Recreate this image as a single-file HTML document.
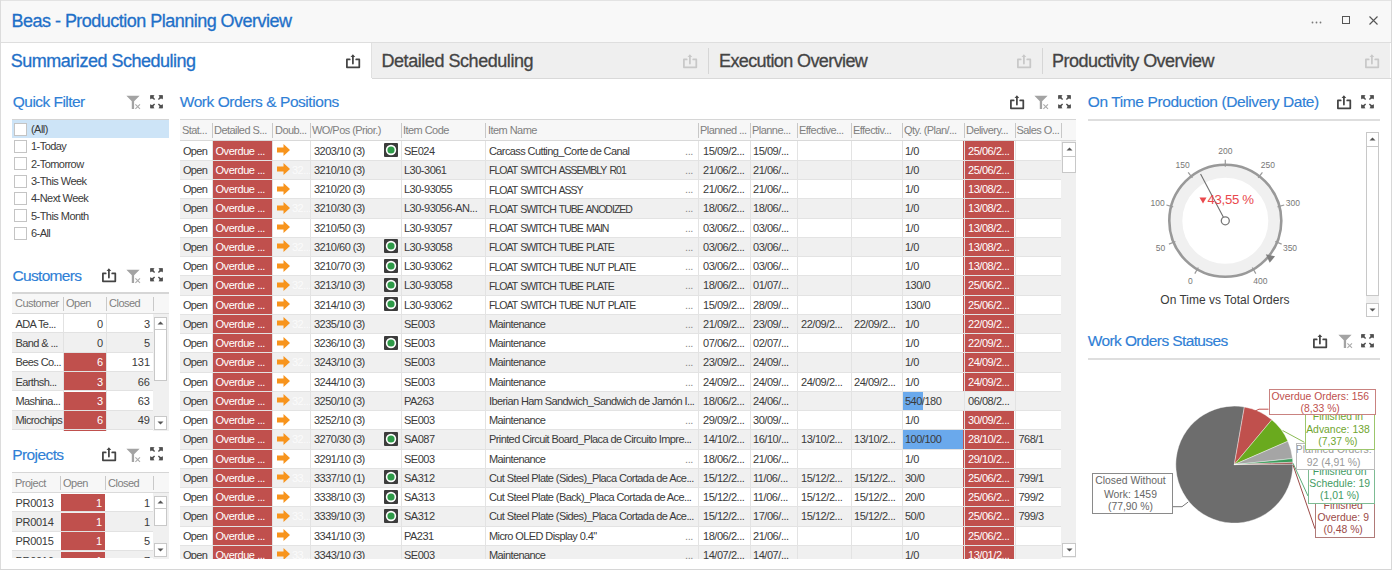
<!DOCTYPE html>
<html><head><meta charset="utf-8"><title>Beas - Production Planning Overview</title>
<style>
html,body{margin:0;padding:0;background:#fff;}
body{width:1392px;height:570px;position:relative;overflow:hidden;font-family:"Liberation Sans", sans-serif;}
.r{position:absolute;}
.t{position:absolute;white-space:nowrap;}
svg{overflow:visible;}
</style></head><body>
<div class="r" style="left:0px;top:0px;width:1392px;height:570px;background:#ffffff;"></div>
<div class="r" style="left:0px;top:0px;width:1392px;height:42px;background:#f8f8f8;"></div>
<div class="r" style="left:0px;top:0px;width:1392px;height:1px;background:#e3e3e3;"></div>
<div class="r" style="left:0px;top:42px;width:1392px;height:1.3px;background:#dedede;"></div>
<div class="r" style="left:0px;top:0px;width:1px;height:570px;background:#dcdcdc;"></div>
<div class="r" style="left:1391px;top:0px;width:1px;height:570px;background:#d8d8d8;"></div>
<div class="r" style="left:0px;top:569px;width:1392px;height:1px;background:#d6d6d6;"></div>
<div class="t" style="left:11.5px;top:11.76px;font-size:18px;line-height:18px;color:#1f70c8;letter-spacing:-0.52px;-webkit-text-stroke:0.3px currentColor;">Beas - Production Planning Overview</div>
<svg class="r" style="left:1311px;top:21px;" width="12" height="3" viewBox="0 0 12 3"><g fill="#7a7a7a"><circle cx="1.5" cy="1.5" r="0.9"/><circle cx="5.5" cy="1.5" r="0.9"/><circle cx="9.5" cy="1.5" r="0.9"/></g></svg>
<div class="r" style="left:1342px;top:16px;width:8px;height:8px;background:transparent;border:1.3px solid #555;box-sizing:border-box;"></div>
<svg class="r" style="left:1369px;top:16px;" width="9" height="9" viewBox="0 0 9 9"><path d="M0.5 0.5L8.5 8.5M8.5 0.5L0.5 8.5" stroke="#555" stroke-width="1.1"/></svg>
<div class="r" style="left:372px;top:43px;width:1018px;height:35px;background:#efefef;"></div>
<div class="r" style="left:372px;top:78px;width:1019px;height:1px;background:#d9d9d9;"></div>
<div class="r" style="left:371px;top:43px;width:1px;height:35px;background:#e0e0e0;"></div>
<div class="t" style="left:10.8px;top:51.96px;font-size:18px;line-height:18px;color:#1f70c8;letter-spacing:-0.49px;-webkit-text-stroke:0.3px currentColor;">Summarized Scheduling</div>
<svg class="r" style="left:346px;top:54px;" width="15" height="14" viewBox="0 0 15 14"><path d="M3.7 5.4H0.9V13.3H13.3V5.4H10.2" fill="none" stroke="#444" stroke-width="1.75" stroke-linejoin="round" stroke-linecap="round"/><path d="M6.9 9.6V2.4" stroke="#444" stroke-width="1.75" stroke-linecap="round"/><path d="M4.6 3L6.9 0.2L9.2 3Z" fill="#444"/></svg>
<div class="t" style="left:381.5px;top:51.96px;font-size:18px;line-height:18px;color:#444444;letter-spacing:-0.45px;-webkit-text-stroke:0.3px currentColor;">Detailed Scheduling</div>
<svg class="r" style="left:683px;top:54px;" width="15" height="14" viewBox="0 0 15 14"><path d="M3.7 5.4H0.9V13.3H13.3V5.4H10.2" fill="none" stroke="#c8c8c8" stroke-width="1.75" stroke-linejoin="round" stroke-linecap="round"/><path d="M6.9 9.6V2.4" stroke="#c8c8c8" stroke-width="1.75" stroke-linecap="round"/><path d="M4.6 3L6.9 0.2L9.2 3Z" fill="#c8c8c8"/></svg>
<div class="r" style="left:708px;top:48px;width:1px;height:26px;background:#d6d6d6;"></div>
<div class="t" style="left:719px;top:51.96px;font-size:18px;line-height:18px;color:#444444;letter-spacing:-0.6px;-webkit-text-stroke:0.3px currentColor;">Execution Overview</div>
<svg class="r" style="left:1017px;top:54px;" width="15" height="14" viewBox="0 0 15 14"><path d="M3.7 5.4H0.9V13.3H13.3V5.4H10.2" fill="none" stroke="#c8c8c8" stroke-width="1.75" stroke-linejoin="round" stroke-linecap="round"/><path d="M6.9 9.6V2.4" stroke="#c8c8c8" stroke-width="1.75" stroke-linecap="round"/><path d="M4.6 3L6.9 0.2L9.2 3Z" fill="#c8c8c8"/></svg>
<div class="r" style="left:1042px;top:48px;width:1px;height:26px;background:#d6d6d6;"></div>
<div class="t" style="left:1052px;top:51.96px;font-size:18px;line-height:18px;color:#444444;letter-spacing:-0.53px;-webkit-text-stroke:0.3px currentColor;">Productivity Overview</div>
<svg class="r" style="left:1365px;top:54px;" width="15" height="14" viewBox="0 0 15 14"><path d="M3.7 5.4H0.9V13.3H13.3V5.4H10.2" fill="none" stroke="#c8c8c8" stroke-width="1.75" stroke-linejoin="round" stroke-linecap="round"/><path d="M6.9 9.6V2.4" stroke="#c8c8c8" stroke-width="1.75" stroke-linecap="round"/><path d="M4.6 3L6.9 0.2L9.2 3Z" fill="#c8c8c8"/></svg>
<div class="t" style="left:12.8px;top:94.38px;font-size:15.5px;line-height:15.5px;color:#2f80d6;letter-spacing:-0.54px;-webkit-text-stroke:0.15px currentColor;">Quick Filter</div>
<svg class="r" style="left:126px;top:95px;" width="15" height="14" viewBox="0 0 15 14"><path d="M0.4 0.7H13.6L8.1 6.3V14H5.8V6.3Z" fill="#a3a3a3"/><path d="M9.4 9.3L14 13.9M14 9.3L9.4 13.9" stroke="#ababab" stroke-width="1.1"/></svg>
<svg class="r" style="left:150px;top:95px;" width="14" height="14" viewBox="0 0 14 14"><g fill="#505050"><g transform="translate(0 0) scale(1 1)"><path d="M0.3 0.3H3.6V3.6H0.3Z"/><path d="M0.3 0.3H4.6L0.3 4.6Z"/><path d="M2.5 2.5L4.6 4.6" stroke="#505050" stroke-width="1.4"/></g><g transform="translate(13 0) scale(-1 1)"><path d="M0.3 0.3H3.6V3.6H0.3Z"/><path d="M0.3 0.3H4.6L0.3 4.6Z"/><path d="M2.5 2.5L4.6 4.6" stroke="#505050" stroke-width="1.4"/></g><g transform="translate(0 13.5) scale(1 -1)"><path d="M0.3 0.3H3.6V3.6H0.3Z"/><path d="M0.3 0.3H4.6L0.3 4.6Z"/><path d="M2.5 2.5L4.6 4.6" stroke="#505050" stroke-width="1.4"/></g><g transform="translate(13 13.5) scale(-1 -1)"><path d="M0.3 0.3H3.6V3.6H0.3Z"/><path d="M0.3 0.3H4.6L0.3 4.6Z"/><path d="M2.5 2.5L4.6 4.6" stroke="#505050" stroke-width="1.4"/></g></g></svg>
<div class="t" style="left:179.8px;top:94.38px;font-size:15.5px;line-height:15.5px;color:#2f80d6;letter-spacing:-0.45px;-webkit-text-stroke:0.15px currentColor;">Work Orders &amp; Positions</div>
<svg class="r" style="left:1010px;top:95px;" width="15" height="14" viewBox="0 0 15 14"><path d="M3.7 5.4H0.9V13.3H13.3V5.4H10.2" fill="none" stroke="#444" stroke-width="1.75" stroke-linejoin="round" stroke-linecap="round"/><path d="M6.9 9.6V2.4" stroke="#444" stroke-width="1.75" stroke-linecap="round"/><path d="M4.6 3L6.9 0.2L9.2 3Z" fill="#444"/></svg>
<svg class="r" style="left:1034px;top:95px;" width="15" height="14" viewBox="0 0 15 14"><path d="M0.4 0.7H13.6L8.1 6.3V14H5.8V6.3Z" fill="#a3a3a3"/><path d="M9.4 9.3L14 13.9M14 9.3L9.4 13.9" stroke="#ababab" stroke-width="1.1"/></svg>
<svg class="r" style="left:1058px;top:95px;" width="14" height="14" viewBox="0 0 14 14"><g fill="#505050"><g transform="translate(0 0) scale(1 1)"><path d="M0.3 0.3H3.6V3.6H0.3Z"/><path d="M0.3 0.3H4.6L0.3 4.6Z"/><path d="M2.5 2.5L4.6 4.6" stroke="#505050" stroke-width="1.4"/></g><g transform="translate(13 0) scale(-1 1)"><path d="M0.3 0.3H3.6V3.6H0.3Z"/><path d="M0.3 0.3H4.6L0.3 4.6Z"/><path d="M2.5 2.5L4.6 4.6" stroke="#505050" stroke-width="1.4"/></g><g transform="translate(0 13.5) scale(1 -1)"><path d="M0.3 0.3H3.6V3.6H0.3Z"/><path d="M0.3 0.3H4.6L0.3 4.6Z"/><path d="M2.5 2.5L4.6 4.6" stroke="#505050" stroke-width="1.4"/></g><g transform="translate(13 13.5) scale(-1 -1)"><path d="M0.3 0.3H3.6V3.6H0.3Z"/><path d="M0.3 0.3H4.6L0.3 4.6Z"/><path d="M2.5 2.5L4.6 4.6" stroke="#505050" stroke-width="1.4"/></g></g></svg>
<div class="t" style="left:1087.8px;top:94.38px;font-size:15.5px;line-height:15.5px;color:#2f80d6;letter-spacing:-0.4px;-webkit-text-stroke:0.15px currentColor;">On Time Production (Delivery Date)</div>
<svg class="r" style="left:1337px;top:95px;" width="15" height="14" viewBox="0 0 15 14"><path d="M3.7 5.4H0.9V13.3H13.3V5.4H10.2" fill="none" stroke="#444" stroke-width="1.75" stroke-linejoin="round" stroke-linecap="round"/><path d="M6.9 9.6V2.4" stroke="#444" stroke-width="1.75" stroke-linecap="round"/><path d="M4.6 3L6.9 0.2L9.2 3Z" fill="#444"/></svg>
<svg class="r" style="left:1361px;top:95px;" width="14" height="14" viewBox="0 0 14 14"><g fill="#505050"><g transform="translate(0 0) scale(1 1)"><path d="M0.3 0.3H3.6V3.6H0.3Z"/><path d="M0.3 0.3H4.6L0.3 4.6Z"/><path d="M2.5 2.5L4.6 4.6" stroke="#505050" stroke-width="1.4"/></g><g transform="translate(13 0) scale(-1 1)"><path d="M0.3 0.3H3.6V3.6H0.3Z"/><path d="M0.3 0.3H4.6L0.3 4.6Z"/><path d="M2.5 2.5L4.6 4.6" stroke="#505050" stroke-width="1.4"/></g><g transform="translate(0 13.5) scale(1 -1)"><path d="M0.3 0.3H3.6V3.6H0.3Z"/><path d="M0.3 0.3H4.6L0.3 4.6Z"/><path d="M2.5 2.5L4.6 4.6" stroke="#505050" stroke-width="1.4"/></g><g transform="translate(13 13.5) scale(-1 -1)"><path d="M0.3 0.3H3.6V3.6H0.3Z"/><path d="M0.3 0.3H4.6L0.3 4.6Z"/><path d="M2.5 2.5L4.6 4.6" stroke="#505050" stroke-width="1.4"/></g></g></svg>
<div class="r" style="left:1088px;top:119px;width:292px;height:2px;background:#dedede;"></div>
<div class="t" style="left:12.6px;top:267.78px;font-size:15.5px;line-height:15.5px;color:#2f80d6;letter-spacing:-0.7px;-webkit-text-stroke:0.15px currentColor;">Customers</div>
<svg class="r" style="left:102px;top:268px;" width="15" height="14" viewBox="0 0 15 14"><path d="M3.7 5.4H0.9V13.3H13.3V5.4H10.2" fill="none" stroke="#444" stroke-width="1.75" stroke-linejoin="round" stroke-linecap="round"/><path d="M6.9 9.6V2.4" stroke="#444" stroke-width="1.75" stroke-linecap="round"/><path d="M4.6 3L6.9 0.2L9.2 3Z" fill="#444"/></svg>
<svg class="r" style="left:126px;top:269px;" width="15" height="14" viewBox="0 0 15 14"><path d="M0.4 0.7H13.6L8.1 6.3V14H5.8V6.3Z" fill="#a3a3a3"/><path d="M9.4 9.3L14 13.9M14 9.3L9.4 13.9" stroke="#ababab" stroke-width="1.1"/></svg>
<svg class="r" style="left:150px;top:268px;" width="14" height="14" viewBox="0 0 14 14"><g fill="#505050"><g transform="translate(0 0) scale(1 1)"><path d="M0.3 0.3H3.6V3.6H0.3Z"/><path d="M0.3 0.3H4.6L0.3 4.6Z"/><path d="M2.5 2.5L4.6 4.6" stroke="#505050" stroke-width="1.4"/></g><g transform="translate(13 0) scale(-1 1)"><path d="M0.3 0.3H3.6V3.6H0.3Z"/><path d="M0.3 0.3H4.6L0.3 4.6Z"/><path d="M2.5 2.5L4.6 4.6" stroke="#505050" stroke-width="1.4"/></g><g transform="translate(0 13.5) scale(1 -1)"><path d="M0.3 0.3H3.6V3.6H0.3Z"/><path d="M0.3 0.3H4.6L0.3 4.6Z"/><path d="M2.5 2.5L4.6 4.6" stroke="#505050" stroke-width="1.4"/></g><g transform="translate(13 13.5) scale(-1 -1)"><path d="M0.3 0.3H3.6V3.6H0.3Z"/><path d="M0.3 0.3H4.6L0.3 4.6Z"/><path d="M2.5 2.5L4.6 4.6" stroke="#505050" stroke-width="1.4"/></g></g></svg>
<div class="t" style="left:12.3px;top:446.78px;font-size:15.5px;line-height:15.5px;color:#2f80d6;letter-spacing:-0.6px;-webkit-text-stroke:0.15px currentColor;">Projects</div>
<svg class="r" style="left:102px;top:447px;" width="15" height="14" viewBox="0 0 15 14"><path d="M3.7 5.4H0.9V13.3H13.3V5.4H10.2" fill="none" stroke="#444" stroke-width="1.75" stroke-linejoin="round" stroke-linecap="round"/><path d="M6.9 9.6V2.4" stroke="#444" stroke-width="1.75" stroke-linecap="round"/><path d="M4.6 3L6.9 0.2L9.2 3Z" fill="#444"/></svg>
<svg class="r" style="left:126px;top:448px;" width="15" height="14" viewBox="0 0 15 14"><path d="M0.4 0.7H13.6L8.1 6.3V14H5.8V6.3Z" fill="#a3a3a3"/><path d="M9.4 9.3L14 13.9M14 9.3L9.4 13.9" stroke="#ababab" stroke-width="1.1"/></svg>
<svg class="r" style="left:150px;top:447px;" width="14" height="14" viewBox="0 0 14 14"><g fill="#505050"><g transform="translate(0 0) scale(1 1)"><path d="M0.3 0.3H3.6V3.6H0.3Z"/><path d="M0.3 0.3H4.6L0.3 4.6Z"/><path d="M2.5 2.5L4.6 4.6" stroke="#505050" stroke-width="1.4"/></g><g transform="translate(13 0) scale(-1 1)"><path d="M0.3 0.3H3.6V3.6H0.3Z"/><path d="M0.3 0.3H4.6L0.3 4.6Z"/><path d="M2.5 2.5L4.6 4.6" stroke="#505050" stroke-width="1.4"/></g><g transform="translate(0 13.5) scale(1 -1)"><path d="M0.3 0.3H3.6V3.6H0.3Z"/><path d="M0.3 0.3H4.6L0.3 4.6Z"/><path d="M2.5 2.5L4.6 4.6" stroke="#505050" stroke-width="1.4"/></g><g transform="translate(13 13.5) scale(-1 -1)"><path d="M0.3 0.3H3.6V3.6H0.3Z"/><path d="M0.3 0.3H4.6L0.3 4.6Z"/><path d="M2.5 2.5L4.6 4.6" stroke="#505050" stroke-width="1.4"/></g></g></svg>
<div class="t" style="left:1087.8px;top:333.48px;font-size:15.5px;line-height:15.5px;color:#2f80d6;letter-spacing:-0.62px;-webkit-text-stroke:0.15px currentColor;">Work Orders Statuses</div>
<svg class="r" style="left:1313px;top:334px;" width="15" height="14" viewBox="0 0 15 14"><path d="M3.7 5.4H0.9V13.3H13.3V5.4H10.2" fill="none" stroke="#444" stroke-width="1.75" stroke-linejoin="round" stroke-linecap="round"/><path d="M6.9 9.6V2.4" stroke="#444" stroke-width="1.75" stroke-linecap="round"/><path d="M4.6 3L6.9 0.2L9.2 3Z" fill="#444"/></svg>
<svg class="r" style="left:1338px;top:334px;" width="15" height="14" viewBox="0 0 15 14"><path d="M0.4 0.7H13.6L8.1 6.3V14H5.8V6.3Z" fill="#a3a3a3"/><path d="M9.4 9.3L14 13.9M14 9.3L9.4 13.9" stroke="#ababab" stroke-width="1.1"/></svg>
<svg class="r" style="left:1361px;top:334px;" width="14" height="14" viewBox="0 0 14 14"><g fill="#505050"><g transform="translate(0 0) scale(1 1)"><path d="M0.3 0.3H3.6V3.6H0.3Z"/><path d="M0.3 0.3H4.6L0.3 4.6Z"/><path d="M2.5 2.5L4.6 4.6" stroke="#505050" stroke-width="1.4"/></g><g transform="translate(13 0) scale(-1 1)"><path d="M0.3 0.3H3.6V3.6H0.3Z"/><path d="M0.3 0.3H4.6L0.3 4.6Z"/><path d="M2.5 2.5L4.6 4.6" stroke="#505050" stroke-width="1.4"/></g><g transform="translate(0 13.5) scale(1 -1)"><path d="M0.3 0.3H3.6V3.6H0.3Z"/><path d="M0.3 0.3H4.6L0.3 4.6Z"/><path d="M2.5 2.5L4.6 4.6" stroke="#505050" stroke-width="1.4"/></g><g transform="translate(13 13.5) scale(-1 -1)"><path d="M0.3 0.3H3.6V3.6H0.3Z"/><path d="M0.3 0.3H4.6L0.3 4.6Z"/><path d="M2.5 2.5L4.6 4.6" stroke="#505050" stroke-width="1.4"/></g></g></svg>
<div class="r" style="left:1088px;top:358px;width:292px;height:2px;background:#dedede;"></div>
<div class="r" style="left:12px;top:118.5px;width:157px;height:1.5px;background:#d4d4d4;"></div>
<div class="r" style="left:12px;top:120px;width:157px;height:18px;background:#cde4f7;"></div>
<div class="r" style="left:14px;top:123px;width:13px;height:12.5px;background:#fff;border:1px solid #c4c4c4;box-sizing:border-box;"></div>
<div class="t" style="left:31px;top:123.89px;font-size:11px;line-height:11px;color:#3a3a3a;letter-spacing:-0.55px;">(All)</div>
<div class="r" style="left:14px;top:140px;width:13px;height:12.5px;background:#fff;border:1px solid #c4c4c4;box-sizing:border-box;"></div>
<div class="t" style="left:31px;top:141.29px;font-size:11px;line-height:11px;color:#3a3a3a;letter-spacing:-0.55px;">1-Today</div>
<div class="r" style="left:14px;top:157px;width:13px;height:12.5px;background:#fff;border:1px solid #c4c4c4;box-sizing:border-box;"></div>
<div class="t" style="left:31px;top:158.69px;font-size:11px;line-height:11px;color:#3a3a3a;letter-spacing:-0.55px;">2-Tomorrow</div>
<div class="r" style="left:14px;top:175px;width:13px;height:12.5px;background:#fff;border:1px solid #c4c4c4;box-sizing:border-box;"></div>
<div class="t" style="left:31px;top:176.09px;font-size:11px;line-height:11px;color:#3a3a3a;letter-spacing:-0.55px;">3-This Week</div>
<div class="r" style="left:14px;top:192px;width:13px;height:12.5px;background:#fff;border:1px solid #c4c4c4;box-sizing:border-box;"></div>
<div class="t" style="left:31px;top:193.49px;font-size:11px;line-height:11px;color:#3a3a3a;letter-spacing:-0.55px;">4-Next Week</div>
<div class="r" style="left:14px;top:209px;width:13px;height:12.5px;background:#fff;border:1px solid #c4c4c4;box-sizing:border-box;"></div>
<div class="t" style="left:31px;top:210.89px;font-size:11px;line-height:11px;color:#3a3a3a;letter-spacing:-0.55px;">5-This Month</div>
<div class="r" style="left:14px;top:227px;width:13px;height:12.5px;background:#fff;border:1px solid #c4c4c4;box-sizing:border-box;"></div>
<div class="t" style="left:31px;top:228.29px;font-size:11px;line-height:11px;color:#3a3a3a;letter-spacing:-0.55px;">6-All</div>
<div class="r" style="left:12px;top:292.0px;width:157px;height:1.5px;background:#d6d6d6;"></div>
<div class="r" style="left:12px;top:293.5px;width:157px;height:20.5px;background:#f7f7f7;"></div>
<div class="r" style="left:12px;top:312.5px;width:157px;height:1.5px;background:#dadada;"></div>
<div class="r" style="left:63px;top:296.5px;width:1px;height:14px;background:#c9c9c9;"></div>
<div class="r" style="left:106px;top:296.5px;width:1px;height:14px;background:#c9c9c9;"></div>
<div class="r" style="left:153px;top:296.5px;width:1px;height:14px;background:#c9c9c9;"></div>
<div class="t" style="left:15px;top:298.49px;font-size:11px;line-height:11px;color:#808080;letter-spacing:-0.5px;">Customer</div>
<div class="t" style="left:66px;top:298.49px;font-size:11px;line-height:11px;color:#808080;letter-spacing:-0.5px;">Open</div>
<div class="t" style="left:109px;top:298.49px;font-size:11px;line-height:11px;color:#808080;letter-spacing:-0.5px;">Closed</div>
<div class="r" style="left:153px;top:314px;width:16px;height:117px;background:#f0f0f0;"></div>
<div class="r" style="left:12px;top:314.0px;width:141px;height:19.3px;background:#ffffff;"></div>
<div class="r" style="left:12px;top:332.3px;width:141px;height:1px;background:#e2e2e2;"></div>
<div class="t" style="left:15.5px;top:318.69px;font-size:11px;line-height:11px;color:#3a3a3a;letter-spacing:-0.6px;">ADA Te...</div>
<div class="t" style="left:-197px;width:300px;text-align:right;top:318.69px;font-size:11px;line-height:11px;color:#3a3a3a;">0</div>
<div class="t" style="left:-150px;width:300px;text-align:right;top:318.69px;font-size:11px;line-height:11px;color:#3a3a3a;">3</div>
<div class="r" style="left:12px;top:333.3px;width:141px;height:19.3px;background:#f0f0f0;"></div>
<div class="r" style="left:12px;top:351.6px;width:141px;height:1px;background:#e2e2e2;"></div>
<div class="t" style="left:15.5px;top:337.99px;font-size:11px;line-height:11px;color:#3a3a3a;letter-spacing:-0.6px;">Band &amp; ...</div>
<div class="t" style="left:-197px;width:300px;text-align:right;top:337.99px;font-size:11px;line-height:11px;color:#3a3a3a;">0</div>
<div class="t" style="left:-150px;width:300px;text-align:right;top:337.99px;font-size:11px;line-height:11px;color:#3a3a3a;">5</div>
<div class="r" style="left:12px;top:352.6px;width:141px;height:19.3px;background:#ffffff;"></div>
<div class="r" style="left:64px;top:353.1px;width:42px;height:18.8px;background:#c0504d;"></div>
<div class="r" style="left:12px;top:370.90000000000003px;width:141px;height:1px;background:#e2e2e2;"></div>
<div class="t" style="left:15.5px;top:357.29px;font-size:11px;line-height:11px;color:#3a3a3a;letter-spacing:-0.6px;">Bees Co...</div>
<div class="t" style="left:-197px;width:300px;text-align:right;top:357.29px;font-size:11px;line-height:11px;color:#fff;">6</div>
<div class="t" style="left:-150px;width:300px;text-align:right;top:357.29px;font-size:11px;line-height:11px;color:#3a3a3a;">131</div>
<div class="r" style="left:12px;top:371.9px;width:141px;height:19.3px;background:#f0f0f0;"></div>
<div class="r" style="left:64px;top:372.4px;width:42px;height:18.8px;background:#c0504d;"></div>
<div class="r" style="left:12px;top:390.2px;width:141px;height:1px;background:#e2e2e2;"></div>
<div class="t" style="left:15.5px;top:376.59px;font-size:11px;line-height:11px;color:#3a3a3a;letter-spacing:-0.6px;">Earthsh...</div>
<div class="t" style="left:-197px;width:300px;text-align:right;top:376.59px;font-size:11px;line-height:11px;color:#fff;">3</div>
<div class="t" style="left:-150px;width:300px;text-align:right;top:376.59px;font-size:11px;line-height:11px;color:#3a3a3a;">66</div>
<div class="r" style="left:12px;top:391.2px;width:141px;height:19.3px;background:#ffffff;"></div>
<div class="r" style="left:64px;top:391.7px;width:42px;height:18.8px;background:#c0504d;"></div>
<div class="r" style="left:12px;top:409.5px;width:141px;height:1px;background:#e2e2e2;"></div>
<div class="t" style="left:15.5px;top:395.89px;font-size:11px;line-height:11px;color:#3a3a3a;letter-spacing:-0.6px;">Mashina...</div>
<div class="t" style="left:-197px;width:300px;text-align:right;top:395.89px;font-size:11px;line-height:11px;color:#fff;">3</div>
<div class="t" style="left:-150px;width:300px;text-align:right;top:395.89px;font-size:11px;line-height:11px;color:#3a3a3a;">63</div>
<div class="r" style="left:12px;top:410.5px;width:141px;height:19.3px;background:#f0f0f0;"></div>
<div class="r" style="left:64px;top:411.0px;width:42px;height:18.8px;background:#c0504d;"></div>
<div class="r" style="left:12px;top:428.8px;width:141px;height:1px;background:#e2e2e2;"></div>
<div class="t" style="left:15.5px;top:415.19px;font-size:11px;line-height:11px;color:#3a3a3a;letter-spacing:-0.6px;">Microchips</div>
<div class="t" style="left:-197px;width:300px;text-align:right;top:415.19px;font-size:11px;line-height:11px;color:#fff;">6</div>
<div class="t" style="left:-150px;width:300px;text-align:right;top:415.19px;font-size:11px;line-height:11px;color:#3a3a3a;">49</div>
<div class="r" style="left:12px;top:429.8px;width:141px;height:1.6999999999999886px;background:#ffffff;"></div>
<div class="r" style="left:64px;top:430.3px;width:42px;height:1.1999999999999886px;background:#c0504d;"></div>
<div class="r" style="left:63px;top:314px;width:1px;height:117px;background:#e2e2e2;"></div>
<div class="r" style="left:106px;top:314px;width:1px;height:117px;background:#e2e2e2;"></div>
<div class="r" style="left:154px;top:317px;width:13px;height:13px;background:#fff;border:1px solid #c8c8c8;box-sizing:border-box;"></div>
<svg class="r" style="left:157px;top:321px;" width="7" height="4" viewBox="0 0 7 4"><path d="M0.5 3.5L3.5 0.5L6.5 3.5Z" fill="#555"/></svg>
<div class="r" style="left:154px;top:329px;width:13px;height:52px;background:#fff;border:1px solid #c8c8c8;box-sizing:border-box;"></div>
<div class="r" style="left:154px;top:416px;width:13px;height:14px;background:#fff;border:1px solid #c8c8c8;box-sizing:border-box;"></div>
<svg class="r" style="left:157px;top:421px;" width="7" height="4" viewBox="0 0 7 4"><path d="M0.5 0.5L3.5 3.5L6.5 0.5Z" fill="#555"/></svg>
<div class="r" style="left:12px;top:471.5px;width:157px;height:1.5px;background:#d6d6d6;"></div>
<div class="r" style="left:12px;top:473px;width:157px;height:20px;background:#f7f7f7;"></div>
<div class="r" style="left:12px;top:491.5px;width:157px;height:1.5px;background:#dadada;"></div>
<div class="r" style="left:60px;top:476px;width:1px;height:14px;background:#c9c9c9;"></div>
<div class="r" style="left:105px;top:476px;width:1px;height:14px;background:#c9c9c9;"></div>
<div class="r" style="left:153px;top:476px;width:1px;height:14px;background:#c9c9c9;"></div>
<div class="t" style="left:15px;top:477.99px;font-size:11px;line-height:11px;color:#808080;letter-spacing:-0.5px;">Project</div>
<div class="t" style="left:63px;top:477.99px;font-size:11px;line-height:11px;color:#808080;letter-spacing:-0.5px;">Open</div>
<div class="t" style="left:108px;top:477.99px;font-size:11px;line-height:11px;color:#808080;letter-spacing:-0.5px;">Closed</div>
<div class="r" style="left:153px;top:493px;width:16px;height:66px;background:#f0f0f0;"></div>
<div class="r" style="left:12px;top:493.0px;width:141px;height:19.4px;background:#ffffff;"></div>
<div class="r" style="left:61px;top:493.5px;width:44px;height:18.9px;background:#c0504d;"></div>
<div class="r" style="left:12px;top:511.4px;width:141px;height:1px;background:#e2e2e2;"></div>
<div class="r" style="left:12px;top:493.0px;width:141px;height:19.4px;overflow:hidden">
<div class="t" style="left:3.5px;top:4.69px;font-size:11px;line-height:11px;color:#3a3a3a;letter-spacing:-0.3px;">PR0013</div>
<div class="t" style="left:-210px;width:300px;text-align:right;top:4.69px;font-size:11px;line-height:11px;color:#fff;">1</div>
<div class="t" style="left:-162px;width:300px;text-align:right;top:4.69px;font-size:11px;line-height:11px;color:#3a3a3a;">1</div>
</div>
<div class="r" style="left:12px;top:512.4px;width:141px;height:19.4px;background:#f0f0f0;"></div>
<div class="r" style="left:61px;top:512.9px;width:44px;height:18.9px;background:#c0504d;"></div>
<div class="r" style="left:12px;top:530.8px;width:141px;height:1px;background:#e2e2e2;"></div>
<div class="r" style="left:12px;top:512.4px;width:141px;height:19.4px;overflow:hidden">
<div class="t" style="left:3.5px;top:4.69px;font-size:11px;line-height:11px;color:#3a3a3a;letter-spacing:-0.3px;">PR0014</div>
<div class="t" style="left:-210px;width:300px;text-align:right;top:4.69px;font-size:11px;line-height:11px;color:#fff;">1</div>
<div class="t" style="left:-162px;width:300px;text-align:right;top:4.69px;font-size:11px;line-height:11px;color:#3a3a3a;">1</div>
</div>
<div class="r" style="left:12px;top:531.8px;width:141px;height:19.4px;background:#ffffff;"></div>
<div class="r" style="left:61px;top:532.3px;width:44px;height:18.9px;background:#c0504d;"></div>
<div class="r" style="left:12px;top:550.1999999999999px;width:141px;height:1px;background:#e2e2e2;"></div>
<div class="r" style="left:12px;top:531.8px;width:141px;height:19.4px;overflow:hidden">
<div class="t" style="left:3.5px;top:4.69px;font-size:11px;line-height:11px;color:#3a3a3a;letter-spacing:-0.3px;">PR0015</div>
<div class="t" style="left:-210px;width:300px;text-align:right;top:4.69px;font-size:11px;line-height:11px;color:#fff;">1</div>
<div class="t" style="left:-162px;width:300px;text-align:right;top:4.69px;font-size:11px;line-height:11px;color:#3a3a3a;">5</div>
</div>
<div class="r" style="left:12px;top:551.2px;width:141px;height:7.0px;background:#f0f0f0;"></div>
<div class="r" style="left:61px;top:551.7px;width:44px;height:6.5px;background:#c0504d;"></div>
<div class="r" style="left:12px;top:551.2px;width:141px;height:7.0px;overflow:hidden">
<div class="t" style="left:3.5px;top:4.69px;font-size:11px;line-height:11px;color:#3a3a3a;letter-spacing:-0.3px;">PR0016</div>
<div class="t" style="left:-210px;width:300px;text-align:right;top:4.69px;font-size:11px;line-height:11px;color:#fff;">1</div>
<div class="t" style="left:-162px;width:300px;text-align:right;top:4.69px;font-size:11px;line-height:11px;color:#3a3a3a;">7</div>
</div>
<div class="r" style="left:154px;top:496px;width:13px;height:13px;background:#fff;border:1px solid #c8c8c8;box-sizing:border-box;"></div>
<svg class="r" style="left:157px;top:500px;" width="7" height="4" viewBox="0 0 7 4"><path d="M0.5 3.5L3.5 0.5L6.5 3.5Z" fill="#555"/></svg>
<div class="r" style="left:154px;top:508px;width:13px;height:18px;background:#fff;border:1px solid #c8c8c8;box-sizing:border-box;"></div>
<div class="r" style="left:154px;top:543px;width:13px;height:14px;background:#fff;border:1px solid #c8c8c8;box-sizing:border-box;"></div>
<svg class="r" style="left:157px;top:548px;" width="7" height="4" viewBox="0 0 7 4"><path d="M0.5 0.5L3.5 3.5L6.5 0.5Z" fill="#555"/></svg>
<div class="r" style="left:180px;top:118.5px;width:896px;height:1.5px;background:#d6d6d6;"></div>
<div class="r" style="left:180px;top:120px;width:896px;height:20px;background:#f7f7f7;"></div>
<div class="r" style="left:180px;top:140px;width:896px;height:2px;background:#d9d9d9;"></div>
<div class="r" style="left:212px;top:122.5px;width:1px;height:15.5px;background:#c8c8c8;"></div>
<div class="r" style="left:272px;top:122.5px;width:1px;height:15.5px;background:#c8c8c8;"></div>
<div class="r" style="left:310px;top:122.5px;width:1px;height:15.5px;background:#c8c8c8;"></div>
<div class="r" style="left:401px;top:122.5px;width:1px;height:15.5px;background:#c8c8c8;"></div>
<div class="r" style="left:485px;top:122.5px;width:1px;height:15.5px;background:#c8c8c8;"></div>
<div class="r" style="left:698px;top:122.5px;width:1px;height:15.5px;background:#c8c8c8;"></div>
<div class="r" style="left:750px;top:122.5px;width:1px;height:15.5px;background:#c8c8c8;"></div>
<div class="r" style="left:797px;top:122.5px;width:1px;height:15.5px;background:#c8c8c8;"></div>
<div class="r" style="left:851px;top:122.5px;width:1px;height:15.5px;background:#c8c8c8;"></div>
<div class="r" style="left:901.5px;top:122.5px;width:1px;height:15.5px;background:#c8c8c8;"></div>
<div class="r" style="left:963.5px;top:122.5px;width:1px;height:15.5px;background:#c8c8c8;"></div>
<div class="r" style="left:1014.5px;top:122.5px;width:1px;height:15.5px;background:#c8c8c8;"></div>
<div class="r" style="left:1061px;top:122.5px;width:1px;height:15.5px;background:#c8c8c8;"></div>
<div class="t" style="left:182px;top:125.29px;font-size:11px;line-height:11px;color:#808080;letter-spacing:-0.55px;">Stat...</div>
<div class="t" style="left:214px;top:125.29px;font-size:11px;line-height:11px;color:#808080;letter-spacing:-0.55px;">Detailed S...</div>
<div class="t" style="left:275px;top:125.29px;font-size:11px;line-height:11px;color:#808080;letter-spacing:-0.55px;">Doub...</div>
<div class="t" style="left:312px;top:125.29px;font-size:11px;line-height:11px;color:#808080;letter-spacing:-0.55px;">WO/Pos (Prior.)</div>
<div class="t" style="left:403px;top:125.29px;font-size:11px;line-height:11px;color:#808080;letter-spacing:-0.55px;">Item Code</div>
<div class="t" style="left:488px;top:125.29px;font-size:11px;line-height:11px;color:#808080;letter-spacing:-0.55px;">Item Name</div>
<div class="t" style="left:700px;top:125.29px;font-size:11px;line-height:11px;color:#808080;letter-spacing:-0.55px;">Planned ...</div>
<div class="t" style="left:752px;top:125.29px;font-size:11px;line-height:11px;color:#808080;letter-spacing:-0.55px;">Planne...</div>
<div class="t" style="left:799px;top:125.29px;font-size:11px;line-height:11px;color:#808080;letter-spacing:-0.55px;">Effective...</div>
<div class="t" style="left:853px;top:125.29px;font-size:11px;line-height:11px;color:#808080;letter-spacing:-0.55px;">Effectiv...</div>
<div class="t" style="left:904px;top:125.29px;font-size:11px;line-height:11px;color:#808080;letter-spacing:-0.55px;">Qty. (Plan/...</div>
<div class="t" style="left:966px;top:125.29px;font-size:11px;line-height:11px;color:#808080;letter-spacing:-0.55px;">Delivery...</div>
<div class="t" style="left:1016.5px;top:125.29px;font-size:11px;line-height:11px;color:#808080;letter-spacing:-0.55px;">Sales O...</div>
<div class="r" style="left:180px;top:141px;width:881px;height:417.5px;overflow:hidden">
<div class="r" style="left:0px;top:0px;width:881px;height:20px;background:#ffffff;"></div>
<div class="r" style="left:0px;top:20px;width:881px;height:19px;background:#f0f0f0;"></div>
<div class="r" style="left:0px;top:39px;width:881px;height:19px;background:#ffffff;"></div>
<div class="r" style="left:0px;top:58px;width:881px;height:20px;background:#f0f0f0;"></div>
<div class="r" style="left:0px;top:78px;width:881px;height:19px;background:#ffffff;"></div>
<div class="r" style="left:0px;top:97px;width:881px;height:19px;background:#f0f0f0;"></div>
<div class="r" style="left:0px;top:116px;width:881px;height:19px;background:#ffffff;"></div>
<div class="r" style="left:0px;top:135px;width:881px;height:20px;background:#f0f0f0;"></div>
<div class="r" style="left:0px;top:155px;width:881px;height:19px;background:#ffffff;"></div>
<div class="r" style="left:0px;top:174px;width:881px;height:19px;background:#f0f0f0;"></div>
<div class="r" style="left:0px;top:193px;width:881px;height:19px;background:#ffffff;"></div>
<div class="r" style="left:0px;top:212px;width:881px;height:20px;background:#f0f0f0;"></div>
<div class="r" style="left:0px;top:232px;width:881px;height:19px;background:#ffffff;"></div>
<div class="r" style="left:0px;top:251px;width:881px;height:19px;background:#f0f0f0;"></div>
<div class="r" style="left:0px;top:270px;width:881px;height:19px;background:#ffffff;"></div>
<div class="r" style="left:0px;top:289px;width:881px;height:20px;background:#f0f0f0;"></div>
<div class="r" style="left:0px;top:309px;width:881px;height:19px;background:#ffffff;"></div>
<div class="r" style="left:0px;top:328px;width:881px;height:19px;background:#f0f0f0;"></div>
<div class="r" style="left:0px;top:347px;width:881px;height:19px;background:#ffffff;"></div>
<div class="r" style="left:0px;top:366px;width:881px;height:20px;background:#f0f0f0;"></div>
<div class="r" style="left:0px;top:386px;width:881px;height:19px;background:#ffffff;"></div>
<div class="r" style="left:0px;top:405px;width:881px;height:19px;background:#f0f0f0;"></div>
<div class="r" style="left:32px;top:0px;width:60px;height:19px;background:#c0504d;"></div>
<div class="r" style="left:783px;top:0px;width:51px;height:19px;background:#c0504d;"></div>
<div class="r" style="left:0px;top:19px;width:881px;height:1px;background:#e3e3e3;"></div>
<div class="t" style="left:3px;top:4.59px;font-size:11px;line-height:11px;color:#3a3a3a;letter-spacing:-0.7px;">Open</div>
<div class="t" style="left:35.5px;top:4.59px;font-size:11px;line-height:11px;color:#fff;letter-spacing:-0.45px;">Overdue ...</div>
<svg class="r" style="left:97px;top:3px;" width="13" height="12" viewBox="0 0 13 12"><path d="M0 3.6H6.5V0L13 6L6.5 12V8.4H0Z" fill="#f7941d"/></svg>
<div class="t" style="left:112px;top:4.59px;font-size:11px;line-height:11px;color:rgba(255,255,255,0.75);letter-spacing:-0.5px;">32...</div>
<div class="t" style="left:134px;top:4.59px;font-size:11px;line-height:11px;color:#3a3a3a;letter-spacing:-0.5px;">3203/10 (3)</div>
<svg class="r" style="left:203.5px;top:2px;" width="14" height="14" viewBox="0 0 14 14"><rect x="0" y="0" width="14" height="14" rx="1" fill="#3c3c3c"/><circle cx="7" cy="7" r="5.2" fill="#fff"/><circle cx="7" cy="7" r="3.6" fill="#2e9a48"/></svg>
<div class="t" style="left:224px;top:4.59px;font-size:11px;line-height:11px;color:#3a3a3a;letter-spacing:-0.5px;">SE024</div>
<div class="t" style="left:309px;top:4.59px;font-size:11px;line-height:11px;color:#3a3a3a;letter-spacing:-0.6px;">Carcass Cutting_Corte de Canal</div>
<div class="t" style="left:505px;top:4.59px;font-size:11px;line-height:11px;color:#888;letter-spacing:-0.4px;">...</div>
<div class="t" style="left:523px;top:4.59px;font-size:11px;line-height:11px;color:#3a3a3a;letter-spacing:-0.45px;">15/09/2...</div>
<div class="t" style="left:573px;top:4.59px;font-size:11px;line-height:11px;color:#3a3a3a;letter-spacing:-0.45px;">15/09/...</div>
<div class="t" style="left:621px;top:4.59px;font-size:11px;line-height:11px;color:#3a3a3a;letter-spacing:-0.45px;"></div>
<div class="t" style="left:674px;top:4.59px;font-size:11px;line-height:11px;color:#3a3a3a;letter-spacing:-0.45px;"></div>
<div class="t" style="left:725px;top:4.59px;font-size:11px;line-height:11px;color:#3a3a3a;letter-spacing:-0.5px;">1/0</div>
<div class="t" style="left:788px;top:4.59px;font-size:11px;line-height:11px;color:#fff;letter-spacing:-0.45px;">25/06/2...</div>
<div class="t" style="left:838.5px;top:4.59px;font-size:11px;line-height:11px;color:#3a3a3a;letter-spacing:-0.5px;"></div>
<div class="r" style="left:32px;top:20px;width:60px;height:18px;background:#c0504d;"></div>
<div class="r" style="left:783px;top:20px;width:51px;height:18px;background:#c0504d;"></div>
<div class="r" style="left:0px;top:38px;width:881px;height:1px;background:#e3e3e3;"></div>
<div class="t" style="left:3px;top:23.84px;font-size:11px;line-height:11px;color:#3a3a3a;letter-spacing:-0.7px;">Open</div>
<div class="t" style="left:35.5px;top:23.84px;font-size:11px;line-height:11px;color:#fff;letter-spacing:-0.45px;">Overdue ...</div>
<svg class="r" style="left:97px;top:22px;" width="13" height="12" viewBox="0 0 13 12"><path d="M0 3.6H6.5V0L13 6L6.5 12V8.4H0Z" fill="#f7941d"/></svg>
<div class="t" style="left:112px;top:23.84px;font-size:11px;line-height:11px;color:rgba(255,255,255,0.75);letter-spacing:-0.5px;">32...</div>
<div class="t" style="left:134px;top:23.84px;font-size:11px;line-height:11px;color:#3a3a3a;letter-spacing:-0.5px;">3210/10 (3)</div>
<div class="t" style="left:224px;top:23.84px;font-size:11px;line-height:11px;color:#3a3a3a;letter-spacing:-0.5px;">L30-3061</div>
<div class="t" style="left:309px;top:24.26px;font-size:10.5px;line-height:10.5px;color:#3a3a3a;letter-spacing:-0.98px;word-spacing:1.3px;">FLOAT SWITCH ASSEMBLY R01</div>
<div class="t" style="left:505px;top:23.84px;font-size:11px;line-height:11px;color:#888;letter-spacing:-0.4px;">...</div>
<div class="t" style="left:523px;top:23.84px;font-size:11px;line-height:11px;color:#3a3a3a;letter-spacing:-0.45px;">21/06/2...</div>
<div class="t" style="left:573px;top:23.84px;font-size:11px;line-height:11px;color:#3a3a3a;letter-spacing:-0.45px;">21/06/...</div>
<div class="t" style="left:621px;top:23.84px;font-size:11px;line-height:11px;color:#3a3a3a;letter-spacing:-0.45px;"></div>
<div class="t" style="left:674px;top:23.84px;font-size:11px;line-height:11px;color:#3a3a3a;letter-spacing:-0.45px;"></div>
<div class="t" style="left:725px;top:23.84px;font-size:11px;line-height:11px;color:#3a3a3a;letter-spacing:-0.5px;">1/0</div>
<div class="t" style="left:788px;top:23.84px;font-size:11px;line-height:11px;color:#fff;letter-spacing:-0.45px;">25/06/2...</div>
<div class="t" style="left:838.5px;top:23.84px;font-size:11px;line-height:11px;color:#3a3a3a;letter-spacing:-0.5px;"></div>
<div class="r" style="left:32px;top:39px;width:60px;height:18px;background:#c0504d;"></div>
<div class="r" style="left:783px;top:39px;width:51px;height:18px;background:#c0504d;"></div>
<div class="r" style="left:0px;top:57px;width:881px;height:1px;background:#e3e3e3;"></div>
<div class="t" style="left:3px;top:43.09px;font-size:11px;line-height:11px;color:#3a3a3a;letter-spacing:-0.7px;">Open</div>
<div class="t" style="left:35.5px;top:43.09px;font-size:11px;line-height:11px;color:#fff;letter-spacing:-0.45px;">Overdue ...</div>
<svg class="r" style="left:97px;top:42px;" width="13" height="12" viewBox="0 0 13 12"><path d="M0 3.6H6.5V0L13 6L6.5 12V8.4H0Z" fill="#f7941d"/></svg>
<div class="t" style="left:112px;top:43.09px;font-size:11px;line-height:11px;color:rgba(255,255,255,0.75);letter-spacing:-0.5px;">32...</div>
<div class="t" style="left:134px;top:43.09px;font-size:11px;line-height:11px;color:#3a3a3a;letter-spacing:-0.5px;">3210/20 (3)</div>
<div class="t" style="left:224px;top:43.09px;font-size:11px;line-height:11px;color:#3a3a3a;letter-spacing:-0.5px;">L30-93055</div>
<div class="t" style="left:309px;top:43.51px;font-size:10.5px;line-height:10.5px;color:#3a3a3a;letter-spacing:-0.98px;word-spacing:1.3px;">FLOAT SWITCH ASSY</div>
<div class="t" style="left:505px;top:43.09px;font-size:11px;line-height:11px;color:#888;letter-spacing:-0.4px;">...</div>
<div class="t" style="left:523px;top:43.09px;font-size:11px;line-height:11px;color:#3a3a3a;letter-spacing:-0.45px;">21/06/2...</div>
<div class="t" style="left:573px;top:43.09px;font-size:11px;line-height:11px;color:#3a3a3a;letter-spacing:-0.45px;">21/06/...</div>
<div class="t" style="left:621px;top:43.09px;font-size:11px;line-height:11px;color:#3a3a3a;letter-spacing:-0.45px;"></div>
<div class="t" style="left:674px;top:43.09px;font-size:11px;line-height:11px;color:#3a3a3a;letter-spacing:-0.45px;"></div>
<div class="t" style="left:725px;top:43.09px;font-size:11px;line-height:11px;color:#3a3a3a;letter-spacing:-0.5px;">1/0</div>
<div class="t" style="left:788px;top:43.09px;font-size:11px;line-height:11px;color:#fff;letter-spacing:-0.45px;">13/08/2...</div>
<div class="t" style="left:838.5px;top:43.09px;font-size:11px;line-height:11px;color:#3a3a3a;letter-spacing:-0.5px;"></div>
<div class="r" style="left:32px;top:58px;width:60px;height:19px;background:#c0504d;"></div>
<div class="r" style="left:783px;top:58px;width:51px;height:19px;background:#c0504d;"></div>
<div class="r" style="left:0px;top:77px;width:881px;height:1px;background:#e3e3e3;"></div>
<div class="t" style="left:3px;top:62.34px;font-size:11px;line-height:11px;color:#3a3a3a;letter-spacing:-0.7px;">Open</div>
<div class="t" style="left:35.5px;top:62.34px;font-size:11px;line-height:11px;color:#fff;letter-spacing:-0.45px;">Overdue ...</div>
<svg class="r" style="left:97px;top:61px;" width="13" height="12" viewBox="0 0 13 12"><path d="M0 3.6H6.5V0L13 6L6.5 12V8.4H0Z" fill="#f7941d"/></svg>
<div class="t" style="left:112px;top:62.34px;font-size:11px;line-height:11px;color:rgba(255,255,255,0.75);letter-spacing:-0.5px;">32...</div>
<div class="t" style="left:134px;top:62.34px;font-size:11px;line-height:11px;color:#3a3a3a;letter-spacing:-0.5px;">3210/30 (3)</div>
<div class="t" style="left:224px;top:62.34px;font-size:11px;line-height:11px;color:#3a3a3a;letter-spacing:-0.5px;">L30-93056-AN...</div>
<div class="t" style="left:309px;top:62.76px;font-size:10.5px;line-height:10.5px;color:#3a3a3a;letter-spacing:-0.98px;word-spacing:1.3px;">FLOAT SWITCH TUBE ANODIZED</div>
<div class="t" style="left:505px;top:62.34px;font-size:11px;line-height:11px;color:#888;letter-spacing:-0.4px;">...</div>
<div class="t" style="left:523px;top:62.34px;font-size:11px;line-height:11px;color:#3a3a3a;letter-spacing:-0.45px;">18/06/2...</div>
<div class="t" style="left:573px;top:62.34px;font-size:11px;line-height:11px;color:#3a3a3a;letter-spacing:-0.45px;">18/06/...</div>
<div class="t" style="left:621px;top:62.34px;font-size:11px;line-height:11px;color:#3a3a3a;letter-spacing:-0.45px;"></div>
<div class="t" style="left:674px;top:62.34px;font-size:11px;line-height:11px;color:#3a3a3a;letter-spacing:-0.45px;"></div>
<div class="t" style="left:725px;top:62.34px;font-size:11px;line-height:11px;color:#3a3a3a;letter-spacing:-0.5px;">1/0</div>
<div class="t" style="left:788px;top:62.34px;font-size:11px;line-height:11px;color:#fff;letter-spacing:-0.45px;">13/08/2...</div>
<div class="t" style="left:838.5px;top:62.34px;font-size:11px;line-height:11px;color:#3a3a3a;letter-spacing:-0.5px;"></div>
<div class="r" style="left:32px;top:78px;width:60px;height:18px;background:#c0504d;"></div>
<div class="r" style="left:783px;top:78px;width:51px;height:18px;background:#c0504d;"></div>
<div class="r" style="left:0px;top:96px;width:881px;height:1px;background:#e3e3e3;"></div>
<div class="t" style="left:3px;top:81.59px;font-size:11px;line-height:11px;color:#3a3a3a;letter-spacing:-0.7px;">Open</div>
<div class="t" style="left:35.5px;top:81.59px;font-size:11px;line-height:11px;color:#fff;letter-spacing:-0.45px;">Overdue ...</div>
<svg class="r" style="left:97px;top:80px;" width="13" height="12" viewBox="0 0 13 12"><path d="M0 3.6H6.5V0L13 6L6.5 12V8.4H0Z" fill="#f7941d"/></svg>
<div class="t" style="left:112px;top:81.59px;font-size:11px;line-height:11px;color:rgba(255,255,255,0.75);letter-spacing:-0.5px;">32...</div>
<div class="t" style="left:134px;top:81.59px;font-size:11px;line-height:11px;color:#3a3a3a;letter-spacing:-0.5px;">3210/50 (3)</div>
<div class="t" style="left:224px;top:81.59px;font-size:11px;line-height:11px;color:#3a3a3a;letter-spacing:-0.5px;">L30-93057</div>
<div class="t" style="left:309px;top:82.01px;font-size:10.5px;line-height:10.5px;color:#3a3a3a;letter-spacing:-0.98px;word-spacing:1.3px;">FLOAT SWITCH TUBE MAIN</div>
<div class="t" style="left:505px;top:81.59px;font-size:11px;line-height:11px;color:#888;letter-spacing:-0.4px;">...</div>
<div class="t" style="left:523px;top:81.59px;font-size:11px;line-height:11px;color:#3a3a3a;letter-spacing:-0.45px;">03/06/2...</div>
<div class="t" style="left:573px;top:81.59px;font-size:11px;line-height:11px;color:#3a3a3a;letter-spacing:-0.45px;">03/06/...</div>
<div class="t" style="left:621px;top:81.59px;font-size:11px;line-height:11px;color:#3a3a3a;letter-spacing:-0.45px;"></div>
<div class="t" style="left:674px;top:81.59px;font-size:11px;line-height:11px;color:#3a3a3a;letter-spacing:-0.45px;"></div>
<div class="t" style="left:725px;top:81.59px;font-size:11px;line-height:11px;color:#3a3a3a;letter-spacing:-0.5px;">1/0</div>
<div class="t" style="left:788px;top:81.59px;font-size:11px;line-height:11px;color:#fff;letter-spacing:-0.45px;">13/08/2...</div>
<div class="t" style="left:838.5px;top:81.59px;font-size:11px;line-height:11px;color:#3a3a3a;letter-spacing:-0.5px;"></div>
<div class="r" style="left:32px;top:97px;width:60px;height:18px;background:#c0504d;"></div>
<div class="r" style="left:783px;top:97px;width:51px;height:18px;background:#c0504d;"></div>
<div class="r" style="left:0px;top:115px;width:881px;height:1px;background:#e3e3e3;"></div>
<div class="t" style="left:3px;top:100.84px;font-size:11px;line-height:11px;color:#3a3a3a;letter-spacing:-0.7px;">Open</div>
<div class="t" style="left:35.5px;top:100.84px;font-size:11px;line-height:11px;color:#fff;letter-spacing:-0.45px;">Overdue ...</div>
<svg class="r" style="left:97px;top:99px;" width="13" height="12" viewBox="0 0 13 12"><path d="M0 3.6H6.5V0L13 6L6.5 12V8.4H0Z" fill="#f7941d"/></svg>
<div class="t" style="left:112px;top:100.84px;font-size:11px;line-height:11px;color:rgba(255,255,255,0.75);letter-spacing:-0.5px;">32...</div>
<div class="t" style="left:134px;top:100.84px;font-size:11px;line-height:11px;color:#3a3a3a;letter-spacing:-0.5px;">3210/60 (3)</div>
<svg class="r" style="left:203.5px;top:98px;" width="14" height="14" viewBox="0 0 14 14"><rect x="0" y="0" width="14" height="14" rx="1" fill="#3c3c3c"/><circle cx="7" cy="7" r="5.2" fill="#fff"/><circle cx="7" cy="7" r="3.6" fill="#2e9a48"/></svg>
<div class="t" style="left:224px;top:100.84px;font-size:11px;line-height:11px;color:#3a3a3a;letter-spacing:-0.5px;">L30-93058</div>
<div class="t" style="left:309px;top:101.26px;font-size:10.5px;line-height:10.5px;color:#3a3a3a;letter-spacing:-0.98px;word-spacing:1.3px;">FLOAT SWITCH TUBE PLATE</div>
<div class="t" style="left:505px;top:100.84px;font-size:11px;line-height:11px;color:#888;letter-spacing:-0.4px;">...</div>
<div class="t" style="left:523px;top:100.84px;font-size:11px;line-height:11px;color:#3a3a3a;letter-spacing:-0.45px;">03/06/2...</div>
<div class="t" style="left:573px;top:100.84px;font-size:11px;line-height:11px;color:#3a3a3a;letter-spacing:-0.45px;">03/06/...</div>
<div class="t" style="left:621px;top:100.84px;font-size:11px;line-height:11px;color:#3a3a3a;letter-spacing:-0.45px;"></div>
<div class="t" style="left:674px;top:100.84px;font-size:11px;line-height:11px;color:#3a3a3a;letter-spacing:-0.45px;"></div>
<div class="t" style="left:725px;top:100.84px;font-size:11px;line-height:11px;color:#3a3a3a;letter-spacing:-0.5px;">1/0</div>
<div class="t" style="left:788px;top:100.84px;font-size:11px;line-height:11px;color:#fff;letter-spacing:-0.45px;">13/08/2...</div>
<div class="t" style="left:838.5px;top:100.84px;font-size:11px;line-height:11px;color:#3a3a3a;letter-spacing:-0.5px;"></div>
<div class="r" style="left:32px;top:116px;width:60px;height:18px;background:#c0504d;"></div>
<div class="r" style="left:783px;top:116px;width:51px;height:18px;background:#c0504d;"></div>
<div class="r" style="left:0px;top:134px;width:881px;height:1px;background:#e3e3e3;"></div>
<div class="t" style="left:3px;top:120.09px;font-size:11px;line-height:11px;color:#3a3a3a;letter-spacing:-0.7px;">Open</div>
<div class="t" style="left:35.5px;top:120.09px;font-size:11px;line-height:11px;color:#fff;letter-spacing:-0.45px;">Overdue ...</div>
<svg class="r" style="left:97px;top:119px;" width="13" height="12" viewBox="0 0 13 12"><path d="M0 3.6H6.5V0L13 6L6.5 12V8.4H0Z" fill="#f7941d"/></svg>
<div class="t" style="left:112px;top:120.09px;font-size:11px;line-height:11px;color:rgba(255,255,255,0.75);letter-spacing:-0.5px;">32...</div>
<div class="t" style="left:134px;top:120.09px;font-size:11px;line-height:11px;color:#3a3a3a;letter-spacing:-0.5px;">3210/70 (3)</div>
<svg class="r" style="left:203.5px;top:118px;" width="14" height="14" viewBox="0 0 14 14"><rect x="0" y="0" width="14" height="14" rx="1" fill="#3c3c3c"/><circle cx="7" cy="7" r="5.2" fill="#fff"/><circle cx="7" cy="7" r="3.6" fill="#2e9a48"/></svg>
<div class="t" style="left:224px;top:120.09px;font-size:11px;line-height:11px;color:#3a3a3a;letter-spacing:-0.5px;">L30-93062</div>
<div class="t" style="left:309px;top:120.51px;font-size:10.5px;line-height:10.5px;color:#3a3a3a;letter-spacing:-0.98px;word-spacing:1.3px;">FLOAT SWITCH TUBE NUT PLATE</div>
<div class="t" style="left:505px;top:120.09px;font-size:11px;line-height:11px;color:#888;letter-spacing:-0.4px;">...</div>
<div class="t" style="left:523px;top:120.09px;font-size:11px;line-height:11px;color:#3a3a3a;letter-spacing:-0.45px;">03/06/2...</div>
<div class="t" style="left:573px;top:120.09px;font-size:11px;line-height:11px;color:#3a3a3a;letter-spacing:-0.45px;">03/06/...</div>
<div class="t" style="left:621px;top:120.09px;font-size:11px;line-height:11px;color:#3a3a3a;letter-spacing:-0.45px;"></div>
<div class="t" style="left:674px;top:120.09px;font-size:11px;line-height:11px;color:#3a3a3a;letter-spacing:-0.45px;"></div>
<div class="t" style="left:725px;top:120.09px;font-size:11px;line-height:11px;color:#3a3a3a;letter-spacing:-0.5px;">1/0</div>
<div class="t" style="left:788px;top:120.09px;font-size:11px;line-height:11px;color:#fff;letter-spacing:-0.45px;">13/08/2...</div>
<div class="t" style="left:838.5px;top:120.09px;font-size:11px;line-height:11px;color:#3a3a3a;letter-spacing:-0.5px;"></div>
<div class="r" style="left:32px;top:135px;width:60px;height:19px;background:#c0504d;"></div>
<div class="r" style="left:783px;top:135px;width:51px;height:19px;background:#c0504d;"></div>
<div class="r" style="left:0px;top:154px;width:881px;height:1px;background:#e3e3e3;"></div>
<div class="t" style="left:3px;top:139.34px;font-size:11px;line-height:11px;color:#3a3a3a;letter-spacing:-0.7px;">Open</div>
<div class="t" style="left:35.5px;top:139.34px;font-size:11px;line-height:11px;color:#fff;letter-spacing:-0.45px;">Overdue ...</div>
<svg class="r" style="left:97px;top:138px;" width="13" height="12" viewBox="0 0 13 12"><path d="M0 3.6H6.5V0L13 6L6.5 12V8.4H0Z" fill="#f7941d"/></svg>
<div class="t" style="left:112px;top:139.34px;font-size:11px;line-height:11px;color:rgba(255,255,255,0.75);letter-spacing:-0.5px;">32...</div>
<div class="t" style="left:134px;top:139.34px;font-size:11px;line-height:11px;color:#3a3a3a;letter-spacing:-0.5px;">3213/10 (3)</div>
<svg class="r" style="left:203.5px;top:137px;" width="14" height="14" viewBox="0 0 14 14"><rect x="0" y="0" width="14" height="14" rx="1" fill="#3c3c3c"/><circle cx="7" cy="7" r="5.2" fill="#fff"/><circle cx="7" cy="7" r="3.6" fill="#2e9a48"/></svg>
<div class="t" style="left:224px;top:139.34px;font-size:11px;line-height:11px;color:#3a3a3a;letter-spacing:-0.5px;">L30-93058</div>
<div class="t" style="left:309px;top:139.76px;font-size:10.5px;line-height:10.5px;color:#3a3a3a;letter-spacing:-0.98px;word-spacing:1.3px;">FLOAT SWITCH TUBE PLATE</div>
<div class="t" style="left:505px;top:139.34px;font-size:11px;line-height:11px;color:#888;letter-spacing:-0.4px;">...</div>
<div class="t" style="left:523px;top:139.34px;font-size:11px;line-height:11px;color:#3a3a3a;letter-spacing:-0.45px;">18/06/2...</div>
<div class="t" style="left:573px;top:139.34px;font-size:11px;line-height:11px;color:#3a3a3a;letter-spacing:-0.45px;">01/07/...</div>
<div class="t" style="left:621px;top:139.34px;font-size:11px;line-height:11px;color:#3a3a3a;letter-spacing:-0.45px;"></div>
<div class="t" style="left:674px;top:139.34px;font-size:11px;line-height:11px;color:#3a3a3a;letter-spacing:-0.45px;"></div>
<div class="t" style="left:725px;top:139.34px;font-size:11px;line-height:11px;color:#3a3a3a;letter-spacing:-0.5px;">130/0</div>
<div class="t" style="left:788px;top:139.34px;font-size:11px;line-height:11px;color:#fff;letter-spacing:-0.45px;">25/06/2...</div>
<div class="t" style="left:838.5px;top:139.34px;font-size:11px;line-height:11px;color:#3a3a3a;letter-spacing:-0.5px;"></div>
<div class="r" style="left:32px;top:155px;width:60px;height:18px;background:#c0504d;"></div>
<div class="r" style="left:783px;top:155px;width:51px;height:18px;background:#c0504d;"></div>
<div class="r" style="left:0px;top:173px;width:881px;height:1px;background:#e3e3e3;"></div>
<div class="t" style="left:3px;top:158.59px;font-size:11px;line-height:11px;color:#3a3a3a;letter-spacing:-0.7px;">Open</div>
<div class="t" style="left:35.5px;top:158.59px;font-size:11px;line-height:11px;color:#fff;letter-spacing:-0.45px;">Overdue ...</div>
<svg class="r" style="left:97px;top:157px;" width="13" height="12" viewBox="0 0 13 12"><path d="M0 3.6H6.5V0L13 6L6.5 12V8.4H0Z" fill="#f7941d"/></svg>
<div class="t" style="left:112px;top:158.59px;font-size:11px;line-height:11px;color:rgba(255,255,255,0.75);letter-spacing:-0.5px;">32...</div>
<div class="t" style="left:134px;top:158.59px;font-size:11px;line-height:11px;color:#3a3a3a;letter-spacing:-0.5px;">3214/10 (3)</div>
<svg class="r" style="left:203.5px;top:156px;" width="14" height="14" viewBox="0 0 14 14"><rect x="0" y="0" width="14" height="14" rx="1" fill="#3c3c3c"/><circle cx="7" cy="7" r="5.2" fill="#fff"/><circle cx="7" cy="7" r="3.6" fill="#2e9a48"/></svg>
<div class="t" style="left:224px;top:158.59px;font-size:11px;line-height:11px;color:#3a3a3a;letter-spacing:-0.5px;">L30-93062</div>
<div class="t" style="left:309px;top:159.01px;font-size:10.5px;line-height:10.5px;color:#3a3a3a;letter-spacing:-0.98px;word-spacing:1.3px;">FLOAT SWITCH TUBE NUT PLATE</div>
<div class="t" style="left:505px;top:158.59px;font-size:11px;line-height:11px;color:#888;letter-spacing:-0.4px;">...</div>
<div class="t" style="left:523px;top:158.59px;font-size:11px;line-height:11px;color:#3a3a3a;letter-spacing:-0.45px;">15/09/2...</div>
<div class="t" style="left:573px;top:158.59px;font-size:11px;line-height:11px;color:#3a3a3a;letter-spacing:-0.45px;">28/09/...</div>
<div class="t" style="left:621px;top:158.59px;font-size:11px;line-height:11px;color:#3a3a3a;letter-spacing:-0.45px;"></div>
<div class="t" style="left:674px;top:158.59px;font-size:11px;line-height:11px;color:#3a3a3a;letter-spacing:-0.45px;"></div>
<div class="t" style="left:725px;top:158.59px;font-size:11px;line-height:11px;color:#3a3a3a;letter-spacing:-0.5px;">130/0</div>
<div class="t" style="left:788px;top:158.59px;font-size:11px;line-height:11px;color:#fff;letter-spacing:-0.45px;">25/06/2...</div>
<div class="t" style="left:838.5px;top:158.59px;font-size:11px;line-height:11px;color:#3a3a3a;letter-spacing:-0.5px;"></div>
<div class="r" style="left:32px;top:174px;width:60px;height:18px;background:#c0504d;"></div>
<div class="r" style="left:783px;top:174px;width:51px;height:18px;background:#c0504d;"></div>
<div class="r" style="left:0px;top:192px;width:881px;height:1px;background:#e3e3e3;"></div>
<div class="t" style="left:3px;top:177.84px;font-size:11px;line-height:11px;color:#3a3a3a;letter-spacing:-0.7px;">Open</div>
<div class="t" style="left:35.5px;top:177.84px;font-size:11px;line-height:11px;color:#fff;letter-spacing:-0.45px;">Overdue ...</div>
<svg class="r" style="left:97px;top:176px;" width="13" height="12" viewBox="0 0 13 12"><path d="M0 3.6H6.5V0L13 6L6.5 12V8.4H0Z" fill="#f7941d"/></svg>
<div class="t" style="left:112px;top:177.84px;font-size:11px;line-height:11px;color:rgba(255,255,255,0.75);letter-spacing:-0.5px;">32...</div>
<div class="t" style="left:134px;top:177.84px;font-size:11px;line-height:11px;color:#3a3a3a;letter-spacing:-0.5px;">3235/10 (3)</div>
<div class="t" style="left:224px;top:177.84px;font-size:11px;line-height:11px;color:#3a3a3a;letter-spacing:-0.5px;">SE003</div>
<div class="t" style="left:309px;top:177.84px;font-size:11px;line-height:11px;color:#3a3a3a;letter-spacing:-0.6px;">Maintenance</div>
<div class="t" style="left:505px;top:177.84px;font-size:11px;line-height:11px;color:#888;letter-spacing:-0.4px;">...</div>
<div class="t" style="left:523px;top:177.84px;font-size:11px;line-height:11px;color:#3a3a3a;letter-spacing:-0.45px;">21/09/2...</div>
<div class="t" style="left:573px;top:177.84px;font-size:11px;line-height:11px;color:#3a3a3a;letter-spacing:-0.45px;">23/09/...</div>
<div class="t" style="left:621px;top:177.84px;font-size:11px;line-height:11px;color:#3a3a3a;letter-spacing:-0.45px;">22/09/2...</div>
<div class="t" style="left:674px;top:177.84px;font-size:11px;line-height:11px;color:#3a3a3a;letter-spacing:-0.45px;">22/09/2...</div>
<div class="t" style="left:725px;top:177.84px;font-size:11px;line-height:11px;color:#3a3a3a;letter-spacing:-0.5px;">1/0</div>
<div class="t" style="left:788px;top:177.84px;font-size:11px;line-height:11px;color:#fff;letter-spacing:-0.45px;">22/09/2...</div>
<div class="t" style="left:838.5px;top:177.84px;font-size:11px;line-height:11px;color:#3a3a3a;letter-spacing:-0.5px;"></div>
<div class="r" style="left:32px;top:193px;width:60px;height:18px;background:#c0504d;"></div>
<div class="r" style="left:783px;top:193px;width:51px;height:18px;background:#c0504d;"></div>
<div class="r" style="left:0px;top:211px;width:881px;height:1px;background:#e3e3e3;"></div>
<div class="t" style="left:3px;top:197.09px;font-size:11px;line-height:11px;color:#3a3a3a;letter-spacing:-0.7px;">Open</div>
<div class="t" style="left:35.5px;top:197.09px;font-size:11px;line-height:11px;color:#fff;letter-spacing:-0.45px;">Overdue ...</div>
<svg class="r" style="left:97px;top:196px;" width="13" height="12" viewBox="0 0 13 12"><path d="M0 3.6H6.5V0L13 6L6.5 12V8.4H0Z" fill="#f7941d"/></svg>
<div class="t" style="left:112px;top:197.09px;font-size:11px;line-height:11px;color:rgba(255,255,255,0.75);letter-spacing:-0.5px;">32...</div>
<div class="t" style="left:134px;top:197.09px;font-size:11px;line-height:11px;color:#3a3a3a;letter-spacing:-0.5px;">3236/10 (3)</div>
<svg class="r" style="left:203.5px;top:195px;" width="14" height="14" viewBox="0 0 14 14"><rect x="0" y="0" width="14" height="14" rx="1" fill="#3c3c3c"/><circle cx="7" cy="7" r="5.2" fill="#fff"/><circle cx="7" cy="7" r="3.6" fill="#2e9a48"/></svg>
<div class="t" style="left:224px;top:197.09px;font-size:11px;line-height:11px;color:#3a3a3a;letter-spacing:-0.5px;">SE003</div>
<div class="t" style="left:309px;top:197.09px;font-size:11px;line-height:11px;color:#3a3a3a;letter-spacing:-0.6px;">Maintenance</div>
<div class="t" style="left:505px;top:197.09px;font-size:11px;line-height:11px;color:#888;letter-spacing:-0.4px;">...</div>
<div class="t" style="left:523px;top:197.09px;font-size:11px;line-height:11px;color:#3a3a3a;letter-spacing:-0.45px;">07/06/2...</div>
<div class="t" style="left:573px;top:197.09px;font-size:11px;line-height:11px;color:#3a3a3a;letter-spacing:-0.45px;">02/07/...</div>
<div class="t" style="left:621px;top:197.09px;font-size:11px;line-height:11px;color:#3a3a3a;letter-spacing:-0.45px;"></div>
<div class="t" style="left:674px;top:197.09px;font-size:11px;line-height:11px;color:#3a3a3a;letter-spacing:-0.45px;"></div>
<div class="t" style="left:725px;top:197.09px;font-size:11px;line-height:11px;color:#3a3a3a;letter-spacing:-0.5px;">1/0</div>
<div class="t" style="left:788px;top:197.09px;font-size:11px;line-height:11px;color:#fff;letter-spacing:-0.45px;">22/09/2...</div>
<div class="t" style="left:838.5px;top:197.09px;font-size:11px;line-height:11px;color:#3a3a3a;letter-spacing:-0.5px;"></div>
<div class="r" style="left:32px;top:212px;width:60px;height:19px;background:#c0504d;"></div>
<div class="r" style="left:783px;top:212px;width:51px;height:19px;background:#c0504d;"></div>
<div class="r" style="left:0px;top:231px;width:881px;height:1px;background:#e3e3e3;"></div>
<div class="t" style="left:3px;top:216.34px;font-size:11px;line-height:11px;color:#3a3a3a;letter-spacing:-0.7px;">Open</div>
<div class="t" style="left:35.5px;top:216.34px;font-size:11px;line-height:11px;color:#fff;letter-spacing:-0.45px;">Overdue ...</div>
<svg class="r" style="left:97px;top:215px;" width="13" height="12" viewBox="0 0 13 12"><path d="M0 3.6H6.5V0L13 6L6.5 12V8.4H0Z" fill="#f7941d"/></svg>
<div class="t" style="left:112px;top:216.34px;font-size:11px;line-height:11px;color:rgba(255,255,255,0.75);letter-spacing:-0.5px;">32...</div>
<div class="t" style="left:134px;top:216.34px;font-size:11px;line-height:11px;color:#3a3a3a;letter-spacing:-0.5px;">3243/10 (3)</div>
<div class="t" style="left:224px;top:216.34px;font-size:11px;line-height:11px;color:#3a3a3a;letter-spacing:-0.5px;">SE003</div>
<div class="t" style="left:309px;top:216.34px;font-size:11px;line-height:11px;color:#3a3a3a;letter-spacing:-0.6px;">Maintenance</div>
<div class="t" style="left:505px;top:216.34px;font-size:11px;line-height:11px;color:#888;letter-spacing:-0.4px;">...</div>
<div class="t" style="left:523px;top:216.34px;font-size:11px;line-height:11px;color:#3a3a3a;letter-spacing:-0.45px;">23/09/2...</div>
<div class="t" style="left:573px;top:216.34px;font-size:11px;line-height:11px;color:#3a3a3a;letter-spacing:-0.45px;">24/09/...</div>
<div class="t" style="left:621px;top:216.34px;font-size:11px;line-height:11px;color:#3a3a3a;letter-spacing:-0.45px;"></div>
<div class="t" style="left:674px;top:216.34px;font-size:11px;line-height:11px;color:#3a3a3a;letter-spacing:-0.45px;"></div>
<div class="t" style="left:725px;top:216.34px;font-size:11px;line-height:11px;color:#3a3a3a;letter-spacing:-0.5px;">1/0</div>
<div class="t" style="left:788px;top:216.34px;font-size:11px;line-height:11px;color:#fff;letter-spacing:-0.45px;">24/09/2...</div>
<div class="t" style="left:838.5px;top:216.34px;font-size:11px;line-height:11px;color:#3a3a3a;letter-spacing:-0.5px;"></div>
<div class="r" style="left:32px;top:232px;width:60px;height:18px;background:#c0504d;"></div>
<div class="r" style="left:783px;top:232px;width:51px;height:18px;background:#c0504d;"></div>
<div class="r" style="left:0px;top:250px;width:881px;height:1px;background:#e3e3e3;"></div>
<div class="t" style="left:3px;top:235.59px;font-size:11px;line-height:11px;color:#3a3a3a;letter-spacing:-0.7px;">Open</div>
<div class="t" style="left:35.5px;top:235.59px;font-size:11px;line-height:11px;color:#fff;letter-spacing:-0.45px;">Overdue ...</div>
<svg class="r" style="left:97px;top:234px;" width="13" height="12" viewBox="0 0 13 12"><path d="M0 3.6H6.5V0L13 6L6.5 12V8.4H0Z" fill="#f7941d"/></svg>
<div class="t" style="left:112px;top:235.59px;font-size:11px;line-height:11px;color:rgba(255,255,255,0.75);letter-spacing:-0.5px;">32...</div>
<div class="t" style="left:134px;top:235.59px;font-size:11px;line-height:11px;color:#3a3a3a;letter-spacing:-0.5px;">3244/10 (3)</div>
<div class="t" style="left:224px;top:235.59px;font-size:11px;line-height:11px;color:#3a3a3a;letter-spacing:-0.5px;">SE003</div>
<div class="t" style="left:309px;top:235.59px;font-size:11px;line-height:11px;color:#3a3a3a;letter-spacing:-0.6px;">Maintenance</div>
<div class="t" style="left:505px;top:235.59px;font-size:11px;line-height:11px;color:#888;letter-spacing:-0.4px;">...</div>
<div class="t" style="left:523px;top:235.59px;font-size:11px;line-height:11px;color:#3a3a3a;letter-spacing:-0.45px;">24/09/2...</div>
<div class="t" style="left:573px;top:235.59px;font-size:11px;line-height:11px;color:#3a3a3a;letter-spacing:-0.45px;">24/09/...</div>
<div class="t" style="left:621px;top:235.59px;font-size:11px;line-height:11px;color:#3a3a3a;letter-spacing:-0.45px;">24/09/2...</div>
<div class="t" style="left:674px;top:235.59px;font-size:11px;line-height:11px;color:#3a3a3a;letter-spacing:-0.45px;">24/09/2...</div>
<div class="t" style="left:725px;top:235.59px;font-size:11px;line-height:11px;color:#3a3a3a;letter-spacing:-0.5px;">1/0</div>
<div class="t" style="left:788px;top:235.59px;font-size:11px;line-height:11px;color:#fff;letter-spacing:-0.45px;">24/09/2...</div>
<div class="t" style="left:838.5px;top:235.59px;font-size:11px;line-height:11px;color:#3a3a3a;letter-spacing:-0.5px;"></div>
<div class="r" style="left:32px;top:251px;width:60px;height:18px;background:#c0504d;"></div>
<div class="r" style="left:722px;top:251px;width:20.5px;height:18px;background:#6aa9ec;"></div>
<div class="r" style="left:0px;top:269px;width:881px;height:1px;background:#e3e3e3;"></div>
<div class="t" style="left:3px;top:254.84px;font-size:11px;line-height:11px;color:#3a3a3a;letter-spacing:-0.7px;">Open</div>
<div class="t" style="left:35.5px;top:254.84px;font-size:11px;line-height:11px;color:#fff;letter-spacing:-0.45px;">Overdue ...</div>
<svg class="r" style="left:97px;top:253px;" width="13" height="12" viewBox="0 0 13 12"><path d="M0 3.6H6.5V0L13 6L6.5 12V8.4H0Z" fill="#f7941d"/></svg>
<div class="t" style="left:112px;top:254.84px;font-size:11px;line-height:11px;color:rgba(255,255,255,0.75);letter-spacing:-0.5px;">32...</div>
<div class="t" style="left:134px;top:254.84px;font-size:11px;line-height:11px;color:#3a3a3a;letter-spacing:-0.5px;">3250/10 (3)</div>
<div class="t" style="left:224px;top:254.84px;font-size:11px;line-height:11px;color:#3a3a3a;letter-spacing:-0.5px;">PA263</div>
<div class="t" style="left:309px;top:254.84px;font-size:11px;line-height:11px;color:#3a3a3a;letter-spacing:-0.6px;">Iberian Ham Sandwich_Sandwich de Jam&oacute;n I...</div>
<div class="t" style="left:523px;top:254.84px;font-size:11px;line-height:11px;color:#3a3a3a;letter-spacing:-0.45px;">18/06/2...</div>
<div class="t" style="left:573px;top:254.84px;font-size:11px;line-height:11px;color:#3a3a3a;letter-spacing:-0.45px;">24/06/...</div>
<div class="t" style="left:621px;top:254.84px;font-size:11px;line-height:11px;color:#3a3a3a;letter-spacing:-0.45px;"></div>
<div class="t" style="left:674px;top:254.84px;font-size:11px;line-height:11px;color:#3a3a3a;letter-spacing:-0.45px;"></div>
<div class="t" style="left:725px;top:254.84px;font-size:11px;line-height:11px;color:#3a3a3a;letter-spacing:-0.5px;">540/180</div>
<div class="t" style="left:788px;top:254.84px;font-size:11px;line-height:11px;color:#3a3a3a;letter-spacing:-0.45px;">06/08/2...</div>
<div class="t" style="left:838.5px;top:254.84px;font-size:11px;line-height:11px;color:#3a3a3a;letter-spacing:-0.5px;"></div>
<div class="r" style="left:32px;top:270px;width:60px;height:18px;background:#c0504d;"></div>
<div class="r" style="left:783px;top:270px;width:51px;height:18px;background:#c0504d;"></div>
<div class="r" style="left:0px;top:288px;width:881px;height:1px;background:#e3e3e3;"></div>
<div class="t" style="left:3px;top:274.09px;font-size:11px;line-height:11px;color:#3a3a3a;letter-spacing:-0.7px;">Open</div>
<div class="t" style="left:35.5px;top:274.09px;font-size:11px;line-height:11px;color:#fff;letter-spacing:-0.45px;">Overdue ...</div>
<svg class="r" style="left:97px;top:273px;" width="13" height="12" viewBox="0 0 13 12"><path d="M0 3.6H6.5V0L13 6L6.5 12V8.4H0Z" fill="#f7941d"/></svg>
<div class="t" style="left:112px;top:274.09px;font-size:11px;line-height:11px;color:rgba(255,255,255,0.75);letter-spacing:-0.5px;">32...</div>
<div class="t" style="left:134px;top:274.09px;font-size:11px;line-height:11px;color:#3a3a3a;letter-spacing:-0.5px;">3252/10 (3)</div>
<div class="t" style="left:224px;top:274.09px;font-size:11px;line-height:11px;color:#3a3a3a;letter-spacing:-0.5px;">SE003</div>
<div class="t" style="left:309px;top:274.09px;font-size:11px;line-height:11px;color:#3a3a3a;letter-spacing:-0.6px;">Maintenance</div>
<div class="t" style="left:505px;top:274.09px;font-size:11px;line-height:11px;color:#888;letter-spacing:-0.4px;">...</div>
<div class="t" style="left:523px;top:274.09px;font-size:11px;line-height:11px;color:#3a3a3a;letter-spacing:-0.45px;">29/09/2...</div>
<div class="t" style="left:573px;top:274.09px;font-size:11px;line-height:11px;color:#3a3a3a;letter-spacing:-0.45px;">30/09/...</div>
<div class="t" style="left:621px;top:274.09px;font-size:11px;line-height:11px;color:#3a3a3a;letter-spacing:-0.45px;"></div>
<div class="t" style="left:674px;top:274.09px;font-size:11px;line-height:11px;color:#3a3a3a;letter-spacing:-0.45px;"></div>
<div class="t" style="left:725px;top:274.09px;font-size:11px;line-height:11px;color:#3a3a3a;letter-spacing:-0.5px;">1/0</div>
<div class="t" style="left:788px;top:274.09px;font-size:11px;line-height:11px;color:#fff;letter-spacing:-0.45px;">30/09/2...</div>
<div class="t" style="left:838.5px;top:274.09px;font-size:11px;line-height:11px;color:#3a3a3a;letter-spacing:-0.5px;"></div>
<div class="r" style="left:32px;top:289px;width:60px;height:19px;background:#c0504d;"></div>
<div class="r" style="left:722px;top:289px;width:61px;height:19px;background:#6aa9ec;"></div>
<div class="r" style="left:783px;top:289px;width:51px;height:19px;background:#c0504d;"></div>
<div class="r" style="left:0px;top:308px;width:881px;height:1px;background:#e3e3e3;"></div>
<div class="t" style="left:3px;top:293.34px;font-size:11px;line-height:11px;color:#3a3a3a;letter-spacing:-0.7px;">Open</div>
<div class="t" style="left:35.5px;top:293.34px;font-size:11px;line-height:11px;color:#fff;letter-spacing:-0.45px;">Overdue ...</div>
<svg class="r" style="left:97px;top:292px;" width="13" height="12" viewBox="0 0 13 12"><path d="M0 3.6H6.5V0L13 6L6.5 12V8.4H0Z" fill="#f7941d"/></svg>
<div class="t" style="left:112px;top:293.34px;font-size:11px;line-height:11px;color:rgba(255,255,255,0.75);letter-spacing:-0.5px;">32...</div>
<div class="t" style="left:134px;top:293.34px;font-size:11px;line-height:11px;color:#3a3a3a;letter-spacing:-0.5px;">3270/30 (3)</div>
<svg class="r" style="left:203.5px;top:291px;" width="14" height="14" viewBox="0 0 14 14"><rect x="0" y="0" width="14" height="14" rx="1" fill="#3c3c3c"/><circle cx="7" cy="7" r="5.2" fill="#fff"/><circle cx="7" cy="7" r="3.6" fill="#2e9a48"/></svg>
<div class="t" style="left:224px;top:293.34px;font-size:11px;line-height:11px;color:#3a3a3a;letter-spacing:-0.5px;">SA087</div>
<div class="t" style="left:309px;top:293.34px;font-size:11px;line-height:11px;color:#3a3a3a;letter-spacing:-0.6px;">Printed Circuit Board_Placa de Circuito Impre...</div>
<div class="t" style="left:523px;top:293.34px;font-size:11px;line-height:11px;color:#3a3a3a;letter-spacing:-0.45px;">14/10/2...</div>
<div class="t" style="left:573px;top:293.34px;font-size:11px;line-height:11px;color:#3a3a3a;letter-spacing:-0.45px;">16/10/...</div>
<div class="t" style="left:621px;top:293.34px;font-size:11px;line-height:11px;color:#3a3a3a;letter-spacing:-0.45px;">13/10/2...</div>
<div class="t" style="left:674px;top:293.34px;font-size:11px;line-height:11px;color:#3a3a3a;letter-spacing:-0.45px;">13/10/2...</div>
<div class="t" style="left:725px;top:293.34px;font-size:11px;line-height:11px;color:#3a3a3a;letter-spacing:-0.5px;">100/100</div>
<div class="t" style="left:788px;top:293.34px;font-size:11px;line-height:11px;color:#fff;letter-spacing:-0.45px;">28/10/2...</div>
<div class="t" style="left:838.5px;top:293.34px;font-size:11px;line-height:11px;color:#3a3a3a;letter-spacing:-0.5px;">768/1</div>
<div class="r" style="left:32px;top:309px;width:60px;height:18px;background:#c0504d;"></div>
<div class="r" style="left:783px;top:309px;width:51px;height:18px;background:#c0504d;"></div>
<div class="r" style="left:0px;top:327px;width:881px;height:1px;background:#e3e3e3;"></div>
<div class="t" style="left:3px;top:312.59px;font-size:11px;line-height:11px;color:#3a3a3a;letter-spacing:-0.7px;">Open</div>
<div class="t" style="left:35.5px;top:312.59px;font-size:11px;line-height:11px;color:#fff;letter-spacing:-0.45px;">Overdue ...</div>
<svg class="r" style="left:97px;top:311px;" width="13" height="12" viewBox="0 0 13 12"><path d="M0 3.6H6.5V0L13 6L6.5 12V8.4H0Z" fill="#f7941d"/></svg>
<div class="t" style="left:112px;top:312.59px;font-size:11px;line-height:11px;color:rgba(255,255,255,0.75);letter-spacing:-0.5px;">32...</div>
<div class="t" style="left:134px;top:312.59px;font-size:11px;line-height:11px;color:#3a3a3a;letter-spacing:-0.5px;">3291/10 (3)</div>
<div class="t" style="left:224px;top:312.59px;font-size:11px;line-height:11px;color:#3a3a3a;letter-spacing:-0.5px;">SE003</div>
<div class="t" style="left:309px;top:312.59px;font-size:11px;line-height:11px;color:#3a3a3a;letter-spacing:-0.6px;">Maintenance</div>
<div class="t" style="left:505px;top:312.59px;font-size:11px;line-height:11px;color:#888;letter-spacing:-0.4px;">...</div>
<div class="t" style="left:523px;top:312.59px;font-size:11px;line-height:11px;color:#3a3a3a;letter-spacing:-0.45px;">18/06/2...</div>
<div class="t" style="left:573px;top:312.59px;font-size:11px;line-height:11px;color:#3a3a3a;letter-spacing:-0.45px;">21/06/...</div>
<div class="t" style="left:621px;top:312.59px;font-size:11px;line-height:11px;color:#3a3a3a;letter-spacing:-0.45px;"></div>
<div class="t" style="left:674px;top:312.59px;font-size:11px;line-height:11px;color:#3a3a3a;letter-spacing:-0.45px;"></div>
<div class="t" style="left:725px;top:312.59px;font-size:11px;line-height:11px;color:#3a3a3a;letter-spacing:-0.5px;">1/0</div>
<div class="t" style="left:788px;top:312.59px;font-size:11px;line-height:11px;color:#fff;letter-spacing:-0.45px;">29/10/2...</div>
<div class="t" style="left:838.5px;top:312.59px;font-size:11px;line-height:11px;color:#3a3a3a;letter-spacing:-0.5px;"></div>
<div class="r" style="left:32px;top:328px;width:60px;height:18px;background:#c0504d;"></div>
<div class="r" style="left:783px;top:328px;width:51px;height:18px;background:#c0504d;"></div>
<div class="r" style="left:0px;top:346px;width:881px;height:1px;background:#e3e3e3;"></div>
<div class="t" style="left:3px;top:331.84px;font-size:11px;line-height:11px;color:#3a3a3a;letter-spacing:-0.7px;">Open</div>
<div class="t" style="left:35.5px;top:331.84px;font-size:11px;line-height:11px;color:#fff;letter-spacing:-0.45px;">Overdue ...</div>
<svg class="r" style="left:97px;top:330px;" width="13" height="12" viewBox="0 0 13 12"><path d="M0 3.6H6.5V0L13 6L6.5 12V8.4H0Z" fill="#f7941d"/></svg>
<div class="t" style="left:112px;top:331.84px;font-size:11px;line-height:11px;color:rgba(255,255,255,0.75);letter-spacing:-0.5px;">33...</div>
<div class="t" style="left:134px;top:331.84px;font-size:11px;line-height:11px;color:#3a3a3a;letter-spacing:-0.5px;">3337/10 (1)</div>
<svg class="r" style="left:203.5px;top:329px;" width="14" height="14" viewBox="0 0 14 14"><rect x="0" y="0" width="14" height="14" rx="1" fill="#3c3c3c"/><circle cx="7" cy="7" r="5.2" fill="#fff"/><circle cx="7" cy="7" r="3.6" fill="#2e9a48"/></svg>
<div class="t" style="left:224px;top:331.84px;font-size:11px;line-height:11px;color:#3a3a3a;letter-spacing:-0.5px;">SA312</div>
<div class="t" style="left:309px;top:331.84px;font-size:11px;line-height:11px;color:#3a3a3a;letter-spacing:-0.6px;">Cut Steel Plate (Sides)_Placa Cortada de Ace...</div>
<div class="t" style="left:523px;top:331.84px;font-size:11px;line-height:11px;color:#3a3a3a;letter-spacing:-0.45px;">15/12/2...</div>
<div class="t" style="left:573px;top:331.84px;font-size:11px;line-height:11px;color:#3a3a3a;letter-spacing:-0.45px;">11/06/...</div>
<div class="t" style="left:621px;top:331.84px;font-size:11px;line-height:11px;color:#3a3a3a;letter-spacing:-0.45px;">15/12/2...</div>
<div class="t" style="left:674px;top:331.84px;font-size:11px;line-height:11px;color:#3a3a3a;letter-spacing:-0.45px;">15/12/2...</div>
<div class="t" style="left:725px;top:331.84px;font-size:11px;line-height:11px;color:#3a3a3a;letter-spacing:-0.5px;">30/0</div>
<div class="t" style="left:788px;top:331.84px;font-size:11px;line-height:11px;color:#fff;letter-spacing:-0.45px;">25/06/2...</div>
<div class="t" style="left:838.5px;top:331.84px;font-size:11px;line-height:11px;color:#3a3a3a;letter-spacing:-0.5px;">799/1</div>
<div class="r" style="left:32px;top:347px;width:60px;height:18px;background:#c0504d;"></div>
<div class="r" style="left:783px;top:347px;width:51px;height:18px;background:#c0504d;"></div>
<div class="r" style="left:0px;top:365px;width:881px;height:1px;background:#e3e3e3;"></div>
<div class="t" style="left:3px;top:351.09px;font-size:11px;line-height:11px;color:#3a3a3a;letter-spacing:-0.7px;">Open</div>
<div class="t" style="left:35.5px;top:351.09px;font-size:11px;line-height:11px;color:#fff;letter-spacing:-0.45px;">Overdue ...</div>
<svg class="r" style="left:97px;top:350px;" width="13" height="12" viewBox="0 0 13 12"><path d="M0 3.6H6.5V0L13 6L6.5 12V8.4H0Z" fill="#f7941d"/></svg>
<div class="t" style="left:112px;top:351.09px;font-size:11px;line-height:11px;color:rgba(255,255,255,0.75);letter-spacing:-0.5px;">33...</div>
<div class="t" style="left:134px;top:351.09px;font-size:11px;line-height:11px;color:#3a3a3a;letter-spacing:-0.5px;">3338/10 (3)</div>
<svg class="r" style="left:203.5px;top:349px;" width="14" height="14" viewBox="0 0 14 14"><rect x="0" y="0" width="14" height="14" rx="1" fill="#3c3c3c"/><circle cx="7" cy="7" r="5.2" fill="#fff"/><circle cx="7" cy="7" r="3.6" fill="#2e9a48"/></svg>
<div class="t" style="left:224px;top:351.09px;font-size:11px;line-height:11px;color:#3a3a3a;letter-spacing:-0.5px;">SA313</div>
<div class="t" style="left:309px;top:351.09px;font-size:11px;line-height:11px;color:#3a3a3a;letter-spacing:-0.6px;">Cut Steel Plate (Back)_Placa Cortada de Ace...</div>
<div class="t" style="left:523px;top:351.09px;font-size:11px;line-height:11px;color:#3a3a3a;letter-spacing:-0.45px;">15/12/2...</div>
<div class="t" style="left:573px;top:351.09px;font-size:11px;line-height:11px;color:#3a3a3a;letter-spacing:-0.45px;">11/06/...</div>
<div class="t" style="left:621px;top:351.09px;font-size:11px;line-height:11px;color:#3a3a3a;letter-spacing:-0.45px;">15/12/2...</div>
<div class="t" style="left:674px;top:351.09px;font-size:11px;line-height:11px;color:#3a3a3a;letter-spacing:-0.45px;">15/12/2...</div>
<div class="t" style="left:725px;top:351.09px;font-size:11px;line-height:11px;color:#3a3a3a;letter-spacing:-0.5px;">20/0</div>
<div class="t" style="left:788px;top:351.09px;font-size:11px;line-height:11px;color:#fff;letter-spacing:-0.45px;">25/06/2...</div>
<div class="t" style="left:838.5px;top:351.09px;font-size:11px;line-height:11px;color:#3a3a3a;letter-spacing:-0.5px;">799/2</div>
<div class="r" style="left:32px;top:366px;width:60px;height:19px;background:#c0504d;"></div>
<div class="r" style="left:783px;top:366px;width:51px;height:19px;background:#c0504d;"></div>
<div class="r" style="left:0px;top:385px;width:881px;height:1px;background:#e3e3e3;"></div>
<div class="t" style="left:3px;top:370.34px;font-size:11px;line-height:11px;color:#3a3a3a;letter-spacing:-0.7px;">Open</div>
<div class="t" style="left:35.5px;top:370.34px;font-size:11px;line-height:11px;color:#fff;letter-spacing:-0.45px;">Overdue ...</div>
<svg class="r" style="left:97px;top:369px;" width="13" height="12" viewBox="0 0 13 12"><path d="M0 3.6H6.5V0L13 6L6.5 12V8.4H0Z" fill="#f7941d"/></svg>
<div class="t" style="left:112px;top:370.34px;font-size:11px;line-height:11px;color:rgba(255,255,255,0.75);letter-spacing:-0.5px;">33...</div>
<div class="t" style="left:134px;top:370.34px;font-size:11px;line-height:11px;color:#3a3a3a;letter-spacing:-0.5px;">3339/10 (3)</div>
<svg class="r" style="left:203.5px;top:368px;" width="14" height="14" viewBox="0 0 14 14"><rect x="0" y="0" width="14" height="14" rx="1" fill="#3c3c3c"/><circle cx="7" cy="7" r="5.2" fill="#fff"/><circle cx="7" cy="7" r="3.6" fill="#2e9a48"/></svg>
<div class="t" style="left:224px;top:370.34px;font-size:11px;line-height:11px;color:#3a3a3a;letter-spacing:-0.5px;">SA312</div>
<div class="t" style="left:309px;top:370.34px;font-size:11px;line-height:11px;color:#3a3a3a;letter-spacing:-0.6px;">Cut Steel Plate (Sides)_Placa Cortada de Ace...</div>
<div class="t" style="left:523px;top:370.34px;font-size:11px;line-height:11px;color:#3a3a3a;letter-spacing:-0.45px;">15/12/2...</div>
<div class="t" style="left:573px;top:370.34px;font-size:11px;line-height:11px;color:#3a3a3a;letter-spacing:-0.45px;">17/06/...</div>
<div class="t" style="left:621px;top:370.34px;font-size:11px;line-height:11px;color:#3a3a3a;letter-spacing:-0.45px;">15/12/2...</div>
<div class="t" style="left:674px;top:370.34px;font-size:11px;line-height:11px;color:#3a3a3a;letter-spacing:-0.45px;">15/12/2...</div>
<div class="t" style="left:725px;top:370.34px;font-size:11px;line-height:11px;color:#3a3a3a;letter-spacing:-0.5px;">50/0</div>
<div class="t" style="left:788px;top:370.34px;font-size:11px;line-height:11px;color:#fff;letter-spacing:-0.45px;">25/06/2...</div>
<div class="t" style="left:838.5px;top:370.34px;font-size:11px;line-height:11px;color:#3a3a3a;letter-spacing:-0.5px;">799/3</div>
<div class="r" style="left:32px;top:386px;width:60px;height:18px;background:#c0504d;"></div>
<div class="r" style="left:783px;top:386px;width:51px;height:18px;background:#c0504d;"></div>
<div class="r" style="left:0px;top:404px;width:881px;height:1px;background:#e3e3e3;"></div>
<div class="t" style="left:3px;top:389.59px;font-size:11px;line-height:11px;color:#3a3a3a;letter-spacing:-0.7px;">Open</div>
<div class="t" style="left:35.5px;top:389.59px;font-size:11px;line-height:11px;color:#fff;letter-spacing:-0.45px;">Overdue ...</div>
<svg class="r" style="left:97px;top:388px;" width="13" height="12" viewBox="0 0 13 12"><path d="M0 3.6H6.5V0L13 6L6.5 12V8.4H0Z" fill="#f7941d"/></svg>
<div class="t" style="left:112px;top:389.59px;font-size:11px;line-height:11px;color:rgba(255,255,255,0.75);letter-spacing:-0.5px;">33...</div>
<div class="t" style="left:134px;top:389.59px;font-size:11px;line-height:11px;color:#3a3a3a;letter-spacing:-0.5px;">3341/10 (3)</div>
<div class="t" style="left:224px;top:389.59px;font-size:11px;line-height:11px;color:#3a3a3a;letter-spacing:-0.5px;">PA231</div>
<div class="t" style="left:309px;top:389.59px;font-size:11px;line-height:11px;color:#3a3a3a;letter-spacing:-0.6px;">Micro OLED Display 0.4&quot;</div>
<div class="t" style="left:505px;top:389.59px;font-size:11px;line-height:11px;color:#888;letter-spacing:-0.4px;">...</div>
<div class="t" style="left:523px;top:389.59px;font-size:11px;line-height:11px;color:#3a3a3a;letter-spacing:-0.45px;">18/06/2...</div>
<div class="t" style="left:573px;top:389.59px;font-size:11px;line-height:11px;color:#3a3a3a;letter-spacing:-0.45px;">21/06/...</div>
<div class="t" style="left:621px;top:389.59px;font-size:11px;line-height:11px;color:#3a3a3a;letter-spacing:-0.45px;"></div>
<div class="t" style="left:674px;top:389.59px;font-size:11px;line-height:11px;color:#3a3a3a;letter-spacing:-0.45px;"></div>
<div class="t" style="left:725px;top:389.59px;font-size:11px;line-height:11px;color:#3a3a3a;letter-spacing:-0.5px;">1/0</div>
<div class="t" style="left:788px;top:389.59px;font-size:11px;line-height:11px;color:#fff;letter-spacing:-0.45px;">25/06/2...</div>
<div class="t" style="left:838.5px;top:389.59px;font-size:11px;line-height:11px;color:#3a3a3a;letter-spacing:-0.5px;"></div>
<div class="r" style="left:32px;top:405px;width:60px;height:18px;background:#c0504d;"></div>
<div class="r" style="left:783px;top:405px;width:51px;height:18px;background:#c0504d;"></div>
<div class="r" style="left:0px;top:423px;width:881px;height:1px;background:#e3e3e3;"></div>
<div class="t" style="left:3px;top:408.84px;font-size:11px;line-height:11px;color:#3a3a3a;letter-spacing:-0.7px;">Open</div>
<div class="t" style="left:35.5px;top:408.84px;font-size:11px;line-height:11px;color:#fff;letter-spacing:-0.45px;">Overdue ...</div>
<svg class="r" style="left:97px;top:407px;" width="13" height="12" viewBox="0 0 13 12"><path d="M0 3.6H6.5V0L13 6L6.5 12V8.4H0Z" fill="#f7941d"/></svg>
<div class="t" style="left:112px;top:408.84px;font-size:11px;line-height:11px;color:rgba(255,255,255,0.75);letter-spacing:-0.5px;">33...</div>
<div class="t" style="left:134px;top:408.84px;font-size:11px;line-height:11px;color:#3a3a3a;letter-spacing:-0.5px;">3343/10 (3)</div>
<div class="t" style="left:224px;top:408.84px;font-size:11px;line-height:11px;color:#3a3a3a;letter-spacing:-0.5px;">SE003</div>
<div class="t" style="left:309px;top:408.84px;font-size:11px;line-height:11px;color:#3a3a3a;letter-spacing:-0.6px;">Maintenance</div>
<div class="t" style="left:505px;top:408.84px;font-size:11px;line-height:11px;color:#888;letter-spacing:-0.4px;">...</div>
<div class="t" style="left:523px;top:408.84px;font-size:11px;line-height:11px;color:#3a3a3a;letter-spacing:-0.45px;">14/07/2...</div>
<div class="t" style="left:573px;top:408.84px;font-size:11px;line-height:11px;color:#3a3a3a;letter-spacing:-0.45px;">14/07/...</div>
<div class="t" style="left:621px;top:408.84px;font-size:11px;line-height:11px;color:#3a3a3a;letter-spacing:-0.45px;"></div>
<div class="t" style="left:674px;top:408.84px;font-size:11px;line-height:11px;color:#3a3a3a;letter-spacing:-0.45px;"></div>
<div class="t" style="left:725px;top:408.84px;font-size:11px;line-height:11px;color:#3a3a3a;letter-spacing:-0.5px;">1/0</div>
<div class="t" style="left:788px;top:408.84px;font-size:11px;line-height:11px;color:#fff;letter-spacing:-0.45px;">13/01/2...</div>
<div class="t" style="left:838.5px;top:408.84px;font-size:11px;line-height:11px;color:#3a3a3a;letter-spacing:-0.5px;"></div>
<div class="r" style="left:32px;top:0px;width:1px;height:417.5px;background:#e3e3e3;"></div>
<div class="r" style="left:92px;top:0px;width:1px;height:417.5px;background:#e3e3e3;"></div>
<div class="r" style="left:130px;top:0px;width:1px;height:417.5px;background:#e3e3e3;"></div>
<div class="r" style="left:221px;top:0px;width:1px;height:417.5px;background:#e3e3e3;"></div>
<div class="r" style="left:305px;top:0px;width:1px;height:417.5px;background:#e3e3e3;"></div>
<div class="r" style="left:518px;top:0px;width:1px;height:417.5px;background:#e3e3e3;"></div>
<div class="r" style="left:570px;top:0px;width:1px;height:417.5px;background:#e3e3e3;"></div>
<div class="r" style="left:617px;top:0px;width:1px;height:417.5px;background:#e3e3e3;"></div>
<div class="r" style="left:671px;top:0px;width:1px;height:417.5px;background:#e3e3e3;"></div>
<div class="r" style="left:721.5px;top:0px;width:1px;height:417.5px;background:#e3e3e3;"></div>
<div class="r" style="left:783.5px;top:0px;width:1px;height:417.5px;background:#e3e3e3;"></div>
<div class="r" style="left:834.5px;top:0px;width:1px;height:417.5px;background:#e3e3e3;"></div>
</div>
<div class="r" style="left:1061px;top:141px;width:15px;height:417px;background:#f0f0f0;"></div>
<div class="r" style="left:1062px;top:142px;width:14px;height:15px;background:#fff;border:1px solid #c8c8c8;box-sizing:border-box;"></div>
<svg class="r" style="left:1066px;top:147px;" width="7" height="4" viewBox="0 0 7 4"><path d="M0.5 3.5L3.5 0.5L6.5 3.5Z" fill="#555"/></svg>
<div class="r" style="left:1062px;top:156px;width:14px;height:17px;background:#fff;border:1px solid #c8c8c8;box-sizing:border-box;"></div>
<div class="r" style="left:1062px;top:543px;width:14px;height:14px;background:#fff;border:1px solid #c8c8c8;box-sizing:border-box;"></div>
<svg class="r" style="left:1066px;top:548px;" width="7" height="4" viewBox="0 0 7 4"><path d="M0.5 0.5L3.5 3.5L6.5 0.5Z" fill="#555"/></svg>
<svg class="r" style="left:0;top:0" width="1392" height="570" viewBox="0 0 1392 570"><circle cx="1225.3" cy="220.8" r="49.5" fill="none" stroke="#f0f0f0" stroke-width="13"/><circle cx="1225.3" cy="220.8" r="56" fill="none" stroke="#999" stroke-width="2.6"/><line x1="1198.30" y1="267.57" x2="1194.80" y2="273.63" stroke="#999" stroke-width="1.2"/><text x="1190.3" y="284.4" font-size="8.5" fill="#777" text-anchor="middle" font-family="Liberation Sans">0</text><line x1="1175.41" y1="241.46" x2="1168.94" y2="244.14" stroke="#999" stroke-width="1.2"/><text x="1160.6" y="250.6" font-size="8.5" fill="#777" text-anchor="middle" font-family="Liberation Sans">50</text><line x1="1173.14" y1="206.82" x2="1166.38" y2="205.01" stroke="#999" stroke-width="1.2"/><text x="1157.7" y="205.7" font-size="8.5" fill="#777" text-anchor="middle" font-family="Liberation Sans">100</text><line x1="1192.43" y1="177.96" x2="1188.17" y2="172.41" stroke="#999" stroke-width="1.2"/><text x="1182.7" y="168.3" font-size="8.5" fill="#777" text-anchor="middle" font-family="Liberation Sans">150</text><line x1="1225.30" y1="166.80" x2="1225.30" y2="159.80" stroke="#999" stroke-width="1.2"/><text x="1225.3" y="153.8" font-size="8.5" fill="#777" text-anchor="middle" font-family="Liberation Sans">200</text><line x1="1258.17" y1="177.96" x2="1262.43" y2="172.41" stroke="#999" stroke-width="1.2"/><text x="1267.9" y="168.3" font-size="8.5" fill="#777" text-anchor="middle" font-family="Liberation Sans">250</text><line x1="1277.46" y1="206.82" x2="1284.22" y2="205.01" stroke="#999" stroke-width="1.2"/><text x="1292.9" y="205.7" font-size="8.5" fill="#777" text-anchor="middle" font-family="Liberation Sans">300</text><line x1="1275.19" y1="241.46" x2="1281.66" y2="244.14" stroke="#999" stroke-width="1.2"/><text x="1290.0" y="250.6" font-size="8.5" fill="#777" text-anchor="middle" font-family="Liberation Sans">350</text><line x1="1252.30" y1="267.57" x2="1255.80" y2="273.63" stroke="#999" stroke-width="1.2"/><text x="1260.3" y="284.4" font-size="8.5" fill="#777" text-anchor="middle" font-family="Liberation Sans">400</text><path d="M1265.81 254.19L1269.70 262.84L1275.04 256.36Z" fill="#7f7f7f"/><line x1="1223.43" y1="217.26" x2="1200.58" y2="173.92" stroke="#6f6f6f" stroke-width="1.1"/><circle cx="1225.3" cy="220.8" r="4" fill="#fff" stroke="#777" stroke-width="1.3"/></svg>
<svg class="r" style="left:1199px;top:197px;" width="8" height="7" viewBox="0 0 8 7"><path d="M0.5 0.5H7.5L4 6.5Z" fill="#e9484d"/></svg>
<div class="t" style="left:1207.5px;top:192.83px;font-size:13.2px;line-height:13.2px;color:#e9484d;letter-spacing:-0.3px;">43,55 %</div>
<div class="t" style="left:1074.9px;width:300px;text-align:center;top:294.24px;font-size:12px;line-height:12px;color:#3a3a3a;">On Time vs Total Orders</div>
<div class="r" style="left:1366px;top:132px;width:13px;height:15px;background:#fff;border:1px solid #c8c8c8;box-sizing:border-box;"></div>
<svg class="r" style="left:1369px;top:137px;" width="7" height="4" viewBox="0 0 7 4"><path d="M0.5 3.5L3.5 0.5L6.5 3.5Z" fill="#555"/></svg>
<div class="r" style="left:1366px;top:146px;width:13px;height:150px;background:#fff;border:1px solid #c8c8c8;box-sizing:border-box;"></div>
<div class="r" style="left:1366px;top:296px;width:13px;height:8px;background:#f0f0f0;"></div>
<div class="r" style="left:1366px;top:303px;width:13px;height:14px;background:#fff;border:1px solid #c8c8c8;box-sizing:border-box;"></div>
<svg class="r" style="left:1369px;top:308px;" width="7" height="4" viewBox="0 0 7 4"><path d="M0.5 0.5L3.5 3.5L6.5 0.5Z" fill="#555"/></svg>
<svg class="r" style="left:0;top:0" width="1392" height="570" viewBox="0 0 1392 570"><path d="M1234.3 464.6L1292.80 464.09A58.5 58.5 0 1 1 1244.36 406.97Z" fill="#6d6d6d" stroke="#fff" stroke-width="0.4"/><path d="M1234.3 464.6L1244.36 406.97A58.5 58.5 0 0 1 1271.82 419.72Z" fill="#c0504d" stroke="#fff" stroke-width="0.4"/><path d="M1234.3 464.6L1271.82 419.72A58.5 58.5 0 0 1 1287.91 441.18Z" fill="#6aaa1e" stroke="#fff" stroke-width="0.4"/><path d="M1234.3 464.6L1287.91 441.18A58.5 58.5 0 0 1 1292.49 458.59Z" fill="#a5a5a5" stroke="#fff" stroke-width="0.4"/><path d="M1234.3 464.6L1292.49 458.59A58.5 58.5 0 0 1 1292.75 462.25Z" fill="#3b9c5b" stroke="#fff" stroke-width="0.4"/><path d="M1234.3 464.6L1292.75 462.25A58.5 58.5 0 0 1 1292.80 464.09Z" fill="#9b4a47" stroke="#fff" stroke-width="0.4"/><polyline points="1188.2,502 1182,506.7 1172,506.7" fill="none" stroke="#777" stroke-width="1"/><polyline points="1253,412 1259,409.2 1268.5,409.2" fill="none" stroke="#c0504d" stroke-width="1"/><polyline points="1282.6,430.5 1304.4,442.3" fill="none" stroke="#8bbb55" stroke-width="1"/><polyline points="1293,463.2 1308,496" fill="none" stroke="#5aae78" stroke-width="1"/><polyline points="1293,465 1315,528.8" fill="none" stroke="#9b4a47" stroke-width="1"/></svg>
<div class="r" style="left:1315px;top:499px;width:60px;height:38.5px;background:#fff;border:1px solid #b07a78;box-sizing:border-box;"></div>
<div class="r" style="left:1316px;top:500px;width:58px;height:36.5px;overflow:hidden">
<div class="t" style="left:-12.8px;width:80px;text-align:center;top:0.90px;font-size:10.4px;line-height:10.4px;color:#9b4a47;">Finished</div>
<div class="t" style="left:-12.8px;width:80px;text-align:center;top:12.90px;font-size:10.4px;line-height:10.4px;color:#9b4a47;">Overdue: 9</div>
<div class="t" style="left:-12.8px;width:80px;text-align:center;top:25.10px;font-size:10.4px;line-height:10.4px;color:#9b4a47;">(0,48 %)</div>
</div>
<div class="r" style="left:1308px;top:468px;width:67px;height:35.5px;background:#fff;border:1px solid #7dbb93;box-sizing:border-box;"></div>
<div class="r" style="left:1309px;top:469px;width:65px;height:33.5px;overflow:hidden">
<div class="t" style="left:-12.8px;width:87px;text-align:center;top:-2.40px;font-size:10.4px;line-height:10.4px;color:#3f9b63;">Finished on</div>
<div class="t" style="left:-12.8px;width:87px;text-align:center;top:10.20px;font-size:10.4px;line-height:10.4px;color:#3f9b63;">Schedule: 19</div>
<div class="t" style="left:-12.8px;width:87px;text-align:center;top:21.80px;font-size:10.4px;line-height:10.4px;color:#3f9b63;">(1,01 %)</div>
</div>
<div class="r" style="left:1296px;top:443px;width:79px;height:26.5px;background:#fff;border:1px solid #bcbcbc;box-sizing:border-box;"></div>
<div class="r" style="left:1297px;top:444px;width:77px;height:24.5px;overflow:hidden">
<div class="t" style="left:-12.799999999999997px;width:99px;text-align:center;top:1.30px;font-size:10.4px;line-height:10.4px;color:#999;">Planned Orders:</div>
<div class="t" style="left:-12.799999999999997px;width:99px;text-align:center;top:13.90px;font-size:10.4px;line-height:10.4px;color:#999;">92 (4,91 %)</div>
</div>
<div class="r" style="left:1304.5px;top:409.5px;width:70.5px;height:40.0px;background:#fff;border:1px solid #9cc66c;box-sizing:border-box;"></div>
<div class="r" style="left:1305.5px;top:410.5px;width:68.5px;height:38.0px;overflow:hidden">
<div class="t" style="left:-12.799999999999997px;width:90.5px;text-align:center;top:1.40px;font-size:10.4px;line-height:10.4px;color:#6fa52e;">Finished in</div>
<div class="t" style="left:-12.799999999999997px;width:90.5px;text-align:center;top:14.30px;font-size:10.4px;line-height:10.4px;color:#6fa52e;">Advance: 138</div>
<div class="t" style="left:-12.799999999999997px;width:90.5px;text-align:center;top:26.40px;font-size:10.4px;line-height:10.4px;color:#6fa52e;">(7,37 %)</div>
</div>
<div class="r" style="left:1268.5px;top:389px;width:107.0px;height:26px;background:#fff;border:1px solid #c98280;box-sizing:border-box;"></div>
<div class="r" style="left:1269.5px;top:390px;width:105.0px;height:24px;overflow:hidden">
<div class="t" style="left:-12.799999999999997px;width:127.0px;text-align:center;top:1.60px;font-size:10.4px;line-height:10.4px;color:#c0504d;">Overdue Orders: 156</div>
<div class="t" style="left:-12.799999999999997px;width:127.0px;text-align:center;top:14.30px;font-size:10.4px;line-height:10.4px;color:#c0504d;">(8,33 %)</div>
</div>
<div class="r" style="left:1092px;top:473px;width:80.5px;height:40.5px;background:#fff;border:1px solid #8a8a8a;box-sizing:border-box;"></div>
<div class="r" style="left:1093px;top:474px;width:78.5px;height:38.5px;overflow:hidden">
<div class="t" style="left:-12.799999999999997px;width:100.5px;text-align:center;top:2.40px;font-size:10.4px;line-height:10.4px;color:#666;">Closed Without</div>
<div class="t" style="left:-12.799999999999997px;width:100.5px;text-align:center;top:15.50px;font-size:10.4px;line-height:10.4px;color:#666;">Work: 1459</div>
<div class="t" style="left:-12.799999999999997px;width:100.5px;text-align:center;top:28.10px;font-size:10.4px;line-height:10.4px;color:#666;">(77,90 %)</div>
</div>
</body></html>
